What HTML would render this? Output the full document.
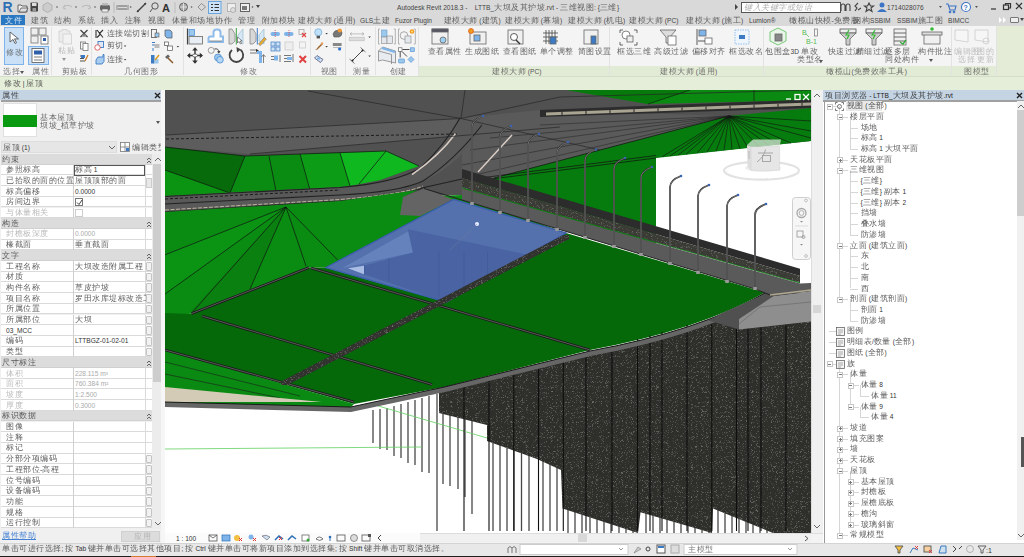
<!DOCTYPE html>
<html><head><meta charset="utf-8"><style>*{box-sizing:border-box;margin:0;padding:0}
html,body{width:1024px;height:557px;overflow:hidden;background:#f0f0f0}
body{position:relative;font-family:"Liberation Sans",sans-serif;font-size:6.6px;line-height:10px;color:#333}
.a{position:absolute;white-space:nowrap}
.c{font-size:8px;line-height:10px;opacity:0.8;letter-spacing:0.5px}
.ic{position:absolute}
</style></head><body>
<div class="a" style="left:0px;top:0px;width:1024px;height:15px;background:#d9d9d9"></div>
<div class="a" style="left:2.5px;top:0px;font:bold 14px/15px 'Liberation Sans',sans-serif;color:#2f6fb5">R</div>
<svg class="ic" style="left:14px;top:0" width="250" height="15" viewBox="14 0 250 15">
<path d="M18,5 h3 l1,1 h5 v6 h-9z" fill="#f0f0f0" stroke="#555" stroke-width="0.9"/><path d="M19,12 l2,-4 h7 l-2,4z" fill="#ddd" stroke="#555" stroke-width="0.8"/>
<rect x="30.5" y="2.5" width="7.5" height="9" rx="0.8" fill="#444"/><rect x="32" y="3" width="4.5" height="3" fill="#ddd"/><rect x="32.5" y="8" width="3.5" height="3" fill="#999"/>
<path d="M43,5 l4.5,-2.5 l4.5,2.5 v5 l-4.5,2.5 l-4.5,-2.5z" fill="#ccc" stroke="#aaa" stroke-width="0.8"/>
<path d="M63,8 q4,-5 9,-1 M63,8 l2,-3 M63,8 l3,1" fill="none" stroke="#bbb" stroke-width="1.1"/>
<path d="M91,8 q-4,-5 -9,-1 M91,8 l-2,-3 M91,8 l-3,1" fill="none" stroke="#bbb" stroke-width="1.1"/>
<rect x="100" y="5" width="10" height="5.5" rx="1.5" fill="#666"/><rect x="102" y="3" width="6" height="2.5" fill="#bbb"/><rect x="102" y="9" width="6" height="3" fill="#eee" stroke="#666" stroke-width="0.6"/>
<path d="M118,6 h9 M118,9 h9" stroke="#666" stroke-width="1.1"/><path d="M117,5 v5 M128,5 v5" stroke="#666" stroke-width="0.7"/>
<path d="M137,12 l9,-9" stroke="#444" stroke-width="1.4"/><circle cx="138" cy="11" r="1" fill="#444"/><circle cx="145" cy="4" r="1" fill="#444"/>
<circle cx="155" cy="6" r="3.2" fill="none" stroke="#555" stroke-width="1"/><path d="M152.5,8.5 l-2.5,3.5" stroke="#555" stroke-width="1"/>
<text x="162" y="12" font-size="11" font-weight="bold" fill="#333" font-family="Liberation Sans">A</text>
<circle cx="183.5" cy="7" r="4" fill="#aaa" stroke="#555" stroke-width="0.8"/><path d="M180,7 h7 M183.5,3 v8" stroke="#eee" stroke-width="0.8"/>
<path d="M198,7 l3.5,-3.5 l4,3.5 l-4,3.5z" fill="none" stroke="#888" stroke-width="0.9"/>
<rect x="208.5" y="1.5" width="12.5" height="12" fill="#cde3f7" stroke="#6aa4dc"/><g stroke="#333" stroke-width="1"><path d="M211,4.5 h2 M214.5,4.5 h4.5 M211,7.5 h2 M214.5,7.5 h4.5 M211,10.5 h2 M214.5,10.5 h4.5"/></g>
<rect x="227.5" y="3.5" width="8" height="8" fill="#eee" stroke="#aaa" stroke-width="0.8"/><circle cx="233" cy="10" r="2.5" fill="#ddd" stroke="#999" stroke-width="0.6"/>
<rect x="240.5" y="3.5" width="9" height="8" fill="#eee" stroke="#555" stroke-width="0.9"/><rect x="242" y="6" width="5" height="4" fill="#777"/>
<g fill="#555"><circle cx="57" cy="7" r="0.8"/><circle cx="76" cy="7" r="0.8"/><circle cx="95" cy="7" r="0.8"/><circle cx="130.7" cy="7" r="0.8"/><circle cx="191.6" cy="7" r="0.8"/><circle cx="252.5" cy="7" r="0.8"/></g>
<path d="M256,5 h4 l-2,3z" fill="#444"/>
<g stroke="#bbb"><line x1="114" y1="2" x2="114" y2="13"/><line x1="175" y1="2" x2="175" y2="13"/></g>
</svg>
<div class="a" style="left:397px;top:3px;color:#444;">Autodesk Revit 2018.3 -&nbsp;&nbsp;&nbsp; LTTB_<span class="c">大坝及其护坡</span>.rvt - <span class="c">三维视图</span>: {<span class="c">三维</span>}</div>
<div class="a" style="left:735px;top:4px;width:0;height:0;border-left:3px solid #444;border-top:3px solid transparent;border-bottom:3px solid transparent"></div>
<div class="a" style="left:741px;top:2px;width:100px;height:11px;background:#fff;border:1px solid #555"></div>
<div class="a" style="left:744px;top:3px;color:#999;font-style:italic"><span class="c">键入关键字或短语</span></div>
<svg class="ic" style="left:838px;top:0" width="186" height="15" viewBox="838 0 186 15">
<g fill="none" stroke="#444" stroke-width="1.1"><path d="M841,11 v-5 q0,-2 2,-2 q2,0 2,2 v5 M846,11 v-5 q0,-2 2,-2 q2,0 2,2 v5"/>
<path d="M855,11 l2,-3 l-2,-2 l3,-3 M858,10 l3,-2"/>
<path d="M869,3 l1.5,3 h3 l-2.5,2 l1,3.5 l-3,-2 l-3,2 l1,-3.5 l-2.5,-2 h3z"/></g>
<circle cx="882" cy="5" r="2.5" fill="#3b74c4"/><path d="M877,12 q5,-6 10,0z" fill="#3b74c4"/>
<path d="M939,6 h3 l-1.5,2z" fill="#555"/>
<g fill="none" stroke="#3b74c4" stroke-width="1.1"><path d="M946,4 h2 l2,6 h5 l1,-4 h-7"/><circle cx="950" cy="12" r="0.8"/><circle cx="954" cy="12" r="0.8"/></g>
<line x1="961" y1="2" x2="961" y2="13" stroke="#ccc"/>
<circle cx="966" cy="7" r="4.5" fill="#fff" stroke="#3b74c4" stroke-width="1.1"/><text x="963.5" y="10" font-size="7" font-weight="bold" fill="#3b74c4" font-family="Liberation Sans">?</text>
<path d="M975,6 h3 l-1.5,2z" fill="#555"/>
<g stroke="#333" stroke-width="1.2" fill="none"><line x1="991" y1="9" x2="996" y2="9"/><rect x="1003.5" y="5" width="5" height="4.5"/><path d="M1005.5,5 v-1.5 h5 v4.5 h-2"/><path d="M1016,3 l6,6 M1022,3 l-6,6"/></g>
</svg>
<div class="a" style="left:887px;top:3px;color:#444;">1714028076</div>
<div class="a" style="left:0px;top:15px;width:1024px;height:10px;background:#d9d9d9"></div>
<div class="a" style="left:1px;top:15px;width:24px;height:10px;background:#2b78c2"></div>
<div class="a" style="left:5px;top:15.5px;color:#fff"><span class="c">文件</span></div>
<div class="a" style="left:31px;top:15.5px;color:#444;"><span class="c">建筑</span></div>
<div class="a" style="left:54px;top:15.5px;color:#444;"><span class="c">结构</span></div>
<div class="a" style="left:78px;top:15.5px;color:#444;"><span class="c">系统</span></div>
<div class="a" style="left:101px;top:15.5px;color:#444;"><span class="c">插入</span></div>
<div class="a" style="left:124.5px;top:15.5px;color:#444;"><span class="c">注释</span></div>
<div class="a" style="left:148px;top:15.5px;color:#444;"><span class="c">视图</span></div>
<div class="a" style="left:171.5px;top:15.5px;color:#444;"><span class="c">体量和场地</span></div>
<div class="a" style="left:215px;top:15.5px;color:#444;"><span class="c">协作</span></div>
<div class="a" style="left:238px;top:15.5px;color:#444;"><span class="c">管理</span></div>
<div class="a" style="left:261.5px;top:15.5px;color:#444;"><span class="c">附加模块</span></div>
<div class="a" style="left:298px;top:15.5px;color:#444;"><span class="c">建模大师</span> (<span class="c">通用</span>)</div>
<div class="a" style="left:360px;top:15.5px;color:#444;">GLS<span class="c">土建</span></div>
<div class="a" style="left:395px;top:15.5px;color:#444;">Fuzor Plugin</div>
<div class="a" style="left:443.5px;top:15.5px;color:#444;"><span class="c">建模大师</span> (<span class="c">建筑</span>)</div>
<div class="a" style="left:505px;top:15.5px;color:#444;"><span class="c">建模大师</span> (<span class="c">幕墙</span>)</div>
<div class="a" style="left:568px;top:15.5px;color:#444;"><span class="c">建模大师</span> (<span class="c">机电</span>)</div>
<div class="a" style="left:629px;top:15.5px;color:#444;"><span class="c">建模大师</span> (PC)</div>
<div class="a" style="left:686px;top:15.5px;color:#444;"><span class="c">建模大师</span> (<span class="c">施工</span>)</div>
<div class="a" style="left:749px;top:15.5px;color:#444;">Lumion®</div>
<div class="a" style="left:789px;top:15.5px;color:#444;"><span class="c">橄榄山快模</span>-<span class="c">免费版</span></div>
<div class="a" style="left:853px;top:15.5px;color:#444;"><span class="c">钢构</span>SSBIM</div>
<div class="a" style="left:897px;top:15.5px;color:#444;">SSBIM<span class="c">施工图</span></div>
<div class="a" style="left:948px;top:15.5px;color:#444;">BIMCC</div>
<svg class="ic" style="left:998px;top:17px" width="10" height="6"><path d="M1,0 L4,3 L1,6z M5,0 L8,3 L5,6z" fill="#fff"/></svg>
<div class="a" style="left:1010px;top:17px;width:9px;height:6px;border:1px solid #777;border-radius:1px;background:#eee"></div>
<div class="a" style="left:1020px;top:18px;width:0;height:0;border-top:3px solid #444;border-left:2px solid transparent;border-right:2px solid transparent"></div>
<div class="a" style="left:0px;top:25px;width:1024px;height:51px;background:#f4f4f4"></div>
<div class="a" style="left:0px;top:25px;width:1024px;height:1px;background:#dadada"></div>
<div class="a" style="left:996px;top:26px;width:28px;height:50px;background:#e4ecd8"></div>
<div class="a" style="left:418px;top:66px;width:578px;height:10px;background:#e2ebd5"></div>
<div class="a" style="left:51px;top:27px;width:1px;height:48px;background:#e2e2e2"></div>
<div class="a" style="left:91px;top:27px;width:1px;height:48px;background:#e2e2e2"></div>
<div class="a" style="left:183px;top:27px;width:1px;height:48px;background:#e2e2e2"></div>
<div class="a" style="left:310px;top:27px;width:1px;height:48px;background:#e2e2e2"></div>
<div class="a" style="left:345px;top:27px;width:1px;height:48px;background:#e2e2e2"></div>
<div class="a" style="left:375px;top:27px;width:1px;height:48px;background:#e2e2e2"></div>
<div class="a" style="left:418px;top:27px;width:1px;height:48px;background:#e2e2e2"></div>
<div class="a" style="left:609px;top:27px;width:1px;height:48px;background:#e2e2e2"></div>
<div class="a" style="left:763px;top:27px;width:1px;height:48px;background:#e2e2e2"></div>
<div class="a" style="left:951px;top:27px;width:1px;height:48px;background:#e2e2e2"></div>
<div class="a" style="left:996px;top:27px;width:1px;height:48px;background:#e2e2e2"></div>
<div class="a" style="left:4px;top:27px;width:20px;height:38px;background:#c9e0f7;border:1px solid #7eb4ea"></div>
<svg class="ic" style="left:9px;top:31px" width="10" height="14"><path d="M1,1 v10 l3,-2.5 l2,4 l1.5,-0.8 l-2,-3.8 h4z" fill="#fff" stroke="#555" stroke-width="0.9"/></svg>
<div class="a" style="left:6px;top:48px;color:#555"><span class="c">修改</span></div>
<div class="a" style="left:3px;top:67px;color:#555"><span class="c">选择</span></div>
<div class="a" style="left:20px;top:71px;width:0;height:0;border-top:3px solid #555;border-left:2.5px solid transparent;border-right:2.5px solid transparent"></div>
<svg class="ic" style="left:29px;top:27px" width="22" height="18"><g stroke="#777" fill="#eee" stroke-width="0.8"><rect x="2" y="1" width="7" height="7"/><rect x="10" y="1" width="7" height="7"/><rect x="2" y="9" width="7" height="7"/></g><rect x="12" y="9" width="7" height="8" fill="#fff" stroke="#666" stroke-width="0.8"/><rect x="14" y="11" width="3" height="3" fill="#2f5fa8"/></svg>
<div class="a" style="left:28px;top:46px;width:21px;height:19px;background:#c9e0f7;border:1px solid #7eb4ea"></div>
<svg class="ic" style="left:31px;top:48px" width="15" height="16"><rect x="1" y="0.5" width="12" height="14" fill="#fff" stroke="#555" stroke-width="0.8"/><rect x="3" y="2.5" width="8" height="4" fill="#2f5fa8"/><path d="M3,9 h8 M3,12 h8" stroke="#555" stroke-width="0.8"/></svg>
<div class="a" style="left:32px;top:67px;color:#555"><span class="c">属性</span></div>
<svg class="ic" style="left:55px;top:27px" width="125" height="40" viewBox="55 27 125 40">
<path d="M59,31 h3 v-1.5 h5 v1.5 h3 v11 h-11z" fill="#ececec" stroke="#cfcfcf" stroke-width="0.8"/><rect x="63" y="34" width="8.5" height="10" fill="#f2f2f2" stroke="#cfcfcf" stroke-width="0.8"/>
<path d="M80.5,30 l7,7 M87.5,30 l-7,7" stroke="#444" stroke-width="1.3"/><ellipse cx="84" cy="35.5" rx="2.5" ry="1.2" fill="#888"/>
<rect x="80.5" y="42" width="5" height="7" fill="#f4f4f4" stroke="#777" stroke-width="0.8"/><rect x="83" y="43.5" width="5" height="7" fill="#fff" stroke="#777" stroke-width="0.8"/>
<path d="M80,56 h5 M80,58.5 h4 M80,61 h5" stroke="#555" stroke-width="1"/><rect x="81" y="55" width="4" height="3" fill="#3c7bc4"/><path d="M85,61 l3,-6" stroke="#c87a20" stroke-width="1.3"/>
</svg>
<div class="a" style="left:58px;top:46px;color:#aaa"><span class="c">粘贴</span></div>
<div class="a" style="left:62px;top:58px;width:0;height:0;border-top:3px solid #999;border-left:2.5px solid transparent;border-right:2.5px solid transparent"></div>
<div class="a" style="left:61.5px;top:67px;color:#555"><span class="c">剪贴板</span></div>
<svg class="ic" style="left:94px;top:27px" width="90" height="40" viewBox="94 27 90 40">
<path d="M96,30 v8 M97,30 l6,7.5 M103,30 l-4,4 M97,37.5 l3,-3" fill="none" stroke="#333" stroke-width="1.1"/>
<rect x="98" y="41.5" width="5.5" height="6" fill="#dfe9f5" stroke="#3c7bc4" stroke-width="0.9"/><circle cx="97.5" cy="47.5" r="2.7" fill="#fff" stroke="#d44" stroke-width="0.8"/>
<path d="M96,60 l2,-3 h5 v-2.5 h1 v7 l-2,2.5 h-6z" fill="#a9cdef" stroke="#3c7bc4" stroke-width="0.9"/>
<g fill="#444"><path d="M143.2,33.6 h2.6 l-1.3,1.6z"/><path d="M123.8,45.5 h2.6 l-1.3,1.6z"/><path d="M123.8,59 h2.6 l-1.3,1.6z"/><path d="M176.6,46 h2.6 l-1.3,1.6z"/></g>
<rect x="151.5" y="29.5" width="5" height="8" fill="#f4f4f4" stroke="#555" stroke-width="0.8"/><rect x="155" y="33" width="4" height="4" fill="#9cc8ec" stroke="#555" stroke-width="0.6"/>
<path d="M165,30 h5 l2,2 v6 h-5 l-2,-2z" fill="#7eb4ea" stroke="#555" stroke-width="0.7"/>
<path d="M152,42.5 h3 M152,45 h3" stroke="#3c7bc4" stroke-width="1"/><rect x="154.5" y="44" width="5" height="4" fill="#bbb"/><path d="M153,48 v3" stroke="#3c7bc4"/>
<rect x="164.5" y="42" width="4" height="3.5" fill="#fff" stroke="#555" stroke-width="0.7"/><rect x="167.5" y="46" width="5" height="4.5" fill="#fff" stroke="#555" stroke-width="0.7"/>
<rect x="151" y="55" width="3.5" height="8.5" fill="#3c7bc4"/><rect x="154.5" y="59" width="4" height="4.5" fill="#9cc8ec"/><path d="M155,60 l4,-5" stroke="#d89a20" stroke-width="1.5"/>
<path d="M165,57 l3,-2.5 l2,2 l-3,2.5z" fill="#666"/><path d="M168,58 l5,5" stroke="#8a5a2a" stroke-width="1.5"/>
</svg>
<div class="a" style="left:106.7px;top:29px;color:#444"><span class="c">连接端切割</span></div>
<div class="a" style="left:106.7px;top:41px;color:#444"><span class="c">剪切</span></div>
<div class="a" style="left:106.7px;top:55px;color:#444"><span class="c">连接</span></div>
<div class="a" style="left:124px;top:67px;color:#555"><span class="c">几何图形</span></div>
<svg class="ic" style="left:185px;top:27px" width="125" height="40" viewBox="185 27 125 40">
<line x1="187.5" y1="28.5" x2="187.5" y2="44.5" stroke="#444" stroke-width="1.2"/>
<rect x="189" y="29.5" width="5.5" height="6" fill="#9cc8ec" stroke="#4a8ad0" stroke-width="0.7"/>
<rect x="189" y="36.5" width="13.5" height="7.5" fill="#e8eef4" stroke="#666" stroke-width="0.8"/>
<path d="M208.5,42 v-3.5 q0,-2 2,-2 h3 v-4 q0,-3 3,-3 h1 q3,0 3,3 v4 h2.5 v5.5z" fill="#fff" stroke="#8fbce8" stroke-width="2"/>
<path d="M209.5,41 h12.5" stroke="#777" stroke-width="0.8"/>
<path d="M229,29 h3 l3,5 v7 l-3,3 h-3z" fill="#d8d8d8" stroke="#888" stroke-width="0.8"/>
<line x1="236.3" y1="28" x2="236.3" y2="44.5" stroke="#3aa040" stroke-width="1"/>
<path d="M238,35 l5,-6 v15 l-5,-3z" fill="#d6e8f5" stroke="#9bc" stroke-width="0.7"/>
<path d="M237.5,37 v6 l1.5,-1.5 l1.5,2.5 l1,-0.5 l-1.3,-2.5 h2z" fill="#fff" stroke="#444" stroke-width="0.6"/>
<path d="M250,29 h3 l3,5 v7 l-3,3 h-3z" fill="#d8d8d8" stroke="#888" stroke-width="0.8"/>
<line x1="257.3" y1="28" x2="257.3" y2="44.5" stroke="#3c7bc4" stroke-width="1"/>
<path d="M259,35 l5,-6 v15 l-5,-3z" fill="#d6e8f5" stroke="#9bc" stroke-width="0.7"/>
<path d="M258.5,44 l6,-6.5 l1.8,1.6 l-6,6.5z" fill="#f0b030" stroke="#555" stroke-width="0.5"/>
<rect x="270.5" y="32" width="9.5" height="4" rx="2" fill="#7eb4ea"/><line x1="275.2" y1="30" x2="275.2" y2="38" stroke="#e04040" stroke-width="0.8" stroke-dasharray="1 1"/>
<g fill="#cfe3f5" stroke="#3c7bc4" stroke-width="0.7"><rect x="271" y="42" width="4" height="4"/><rect x="276" y="42" width="4" height="4"/><rect x="271" y="47" width="4" height="4"/><rect x="276" y="47" width="4" height="4"/></g>
<path d="M271,56.5 h6 M271,59.5 h6 M280,55 v7" stroke="#555" stroke-width="0.8"/><rect x="274" y="55.5" width="4" height="5" fill="#7eb4ea"/>
<rect x="284" y="32" width="9.5" height="4" rx="2" fill="#7eb4ea"/><line x1="289" y1="30" x2="289" y2="38" stroke="#e04040" stroke-width="0.8" stroke-dasharray="1 1"/>
<rect x="285" y="42" width="8" height="8" fill="#eee" stroke="#ccc" stroke-width="0.8"/>
<path d="M284,55.5 h7 M284,58.5 h7 M284,61.5 h7 M293,54 v8" stroke="#555" stroke-width="0.8"/><rect x="287" y="57" width="5" height="3" fill="#7eb4ea"/>
<rect x="299" y="29.5" width="5" height="5" fill="none" stroke="#999" stroke-width="0.7"/><path d="M302,33 l4,4 M306,33 l-4,4" stroke="#e04040" stroke-width="1.1"/>
<rect x="299.5" y="42" width="6" height="6" fill="none" stroke="#ccc" stroke-width="0.8"/>
<path d="M299.5,56 l6.5,6.5 M306,56 l-6.5,6.5" stroke="#e04040" stroke-width="2"/>
<path d="M188,55.5 h14 M195,48.5 v14" stroke="#333" stroke-width="1.4"/>
<path d="M187,55.5 l3.2,-2.8 v5.6z M203,55.5 l-3.2,-2.8 v5.6z M195,47.3 l-2.8,3.2 h5.6z M195,63.7 l-2.8,-3.2 h5.6z" fill="#333"/>
<ellipse cx="195" cy="55.5" rx="2.5" ry="1.5" fill="#fff" stroke="#333" stroke-width="0.6"/>
<circle cx="211.2" cy="50.4" r="3" fill="#f4f4f4" stroke="#888" stroke-width="0.8"/><path d="M214.5,49 q4,-1 4.5,3" fill="none" stroke="#333" stroke-width="0.9"/><path d="M217,51.5 l2,2 l1.5,-2.5z" fill="#333"/>
<circle cx="218" cy="57.5" r="3.5" fill="#9cc8ec" stroke="#4a8ad0" stroke-width="0.8"/><circle cx="220" cy="59.8" r="3.3" fill="#b4d6f2" stroke="#4a8ad0" stroke-width="0.8"/>
<path d="M240.5,49.8 A6.8,6.8 0 1,1 232,50" fill="none" stroke="#444" stroke-width="1.8"/><path d="M236.5,47 l4.5,2.5 l-4,3z" fill="#444"/>
<path d="M250,50 h7 M250,53 h7" stroke="#777" stroke-width="1.2"/><path d="M256,49 l3,1.5 l-3,1.5z" fill="#333"/>
<path d="M257,52.5 h3.5 v10.5" fill="none" stroke="#7eb4ea" stroke-width="3"/><path d="M263.5,55 v8 M261.5,57 l2,-2.5 l2,2.5" fill="none" stroke="#666" stroke-width="0.8"/>
</svg>
<svg class="ic" style="left:310px;top:25px" width="110" height="43" viewBox="310 25 110 43">
<circle cx="318.3" cy="32.3" r="3.6" fill="#bfe0fa" stroke="#7aaed8" stroke-width="0.8"/><rect x="316.6" y="35.8" width="3.4" height="2.6" fill="#555"/>
<path d="M325.3,33 h2.6 l-1.3,1.6z M325.3,46 h2.6 l-1.3,1.6z M368.3,36.5 h2.6 l-1.3,1.6z M368.3,55.5 h2.6 l-1.3,1.6z" fill="#444"/>
<path d="M333,34 q1,-4 6,-4 q3,0 3,3 q0,3 -3,4 h-5z" fill="#777" stroke="#555" stroke-width="0.6"/><circle cx="339.8" cy="30.5" r="2.1" fill="#f39a30"/>
<path d="M315,50 q2,-1 3,-3 l4,-4 l1,1 l-4,4 q-1,2 -4,2z" fill="#a0602a"/><circle cx="322" cy="43.5" r="1.2" fill="#e0a060"/>
<rect x="332.8" y="43" width="8.8" height="3" fill="#888"/><path d="M333,47.5 h8.5" stroke="#aaa" stroke-width="0.8"/><circle cx="339.6" cy="49" r="1.6" fill="#2a6fd0"/>
<path d="M314.5,58 l2.5,-2.5 l6,4 l-2.5,3z" fill="#cfe0f0" stroke="#557" stroke-width="0.8"/><rect x="317" y="57.5" width="3" height="2" fill="#7eb4ea"/>
<path d="M350,33.9 h14 M350,33.9 l2,-1.5 M350,33.9 l2,1.5 M364,33.9 l-2,-1.5 M364,33.9 l-2,1.5" stroke="#aaa" stroke-width="0.7" fill="none"/>
<rect x="349.2" y="37.2" width="15" height="3.6" fill="#ddd" stroke="#bbb" stroke-width="0.6"/>
<path d="M352,61 l11,-11" stroke="#333" stroke-width="0.9"/><path d="M349.5,59 l5,4.5 M360.5,47.5 l5,4.5" stroke="#444" stroke-width="0.7"/><circle cx="352.5" cy="60.5" r="1" fill="#222"/><circle cx="362.5" cy="50.5" r="1" fill="#222"/>
<path d="M380,29 h-1.5 v15 h1.5 M393.8,29 h1.5 v15 h-1.5" fill="none" stroke="#aaa" stroke-width="0.9"/>
<rect x="381.5" y="30" width="5.5" height="7" fill="#9cc8ec" stroke="#6a9cc8" stroke-width="0.6"/><rect x="381.5" y="37" width="5.5" height="6.5" fill="#e4e8ec" stroke="#888" stroke-width="0.6"/><rect x="387" y="36" width="5.5" height="7.5" fill="#e4e8ec" stroke="#888" stroke-width="0.6"/>
<path d="M400,29 h-1.5 v15 h1.5 M413.8,29 h1.5 v15 h-1.5" fill="none" stroke="#aaa" stroke-width="0.9"/>
<circle cx="404" cy="35.5" r="3.8" fill="#f4f4f4" stroke="#888" stroke-width="0.7"/><rect x="405" y="36" width="6" height="7" fill="#e4e8ec" stroke="#888" stroke-width="0.6"/><circle cx="412" cy="31.5" r="2.3" fill="#f39a20"/><circle cx="412" cy="31.5" r="1" fill="#ffe070"/>
<path d="M378.5,51 l4,-4 l13,4 v12 l-13,-3 l-4,1z" fill="#e8ecf0" stroke="#777" stroke-width="0.7"/><path d="M382.5,47 l13,4 l-1,2 l-13,-4z" fill="#7eb4ea"/><path d="M378.5,51 l13,3.5 v9.5" fill="none" stroke="#777" stroke-width="0.7"/>
<rect x="398.5" y="47.8" width="3.5" height="3.5" fill="#fff" stroke="#555" stroke-width="0.6"/><rect x="410.5" y="47.8" width="3.8" height="3.8" fill="#9cc8ec" stroke="#4a8ad0" stroke-width="0.6"/>
<path d="M402.5,49.5 h7 M400.2,51.5 v6 M402,51.5 l5,5" stroke="#222" stroke-width="0.8"/>
<rect x="398.5" y="59" width="6" height="4" rx="1" fill="#9cc8ec" stroke="#4a8ad0" stroke-width="0.6"/><path d="M411,56.5 l3,3 l-3,3 l-3,-3z" fill="#9cc8ec" stroke="#4a8ad0" stroke-width="0.6"/>
</svg>
<div class="a" style="left:240px;top:67px;color:#555"><span class="c">修改</span></div>
<div class="a" style="left:320.5px;top:67px;color:#555"><span class="c">视图</span></div>
<div class="a" style="left:353px;top:67px;color:#555"><span class="c">测量</span></div>
<div class="a" style="left:389.5px;top:67px;color:#555"><span class="c">创建</span></div>
<div class="a" style="left:427.5px;top:47px;color:#444"><span class="c">查看属性</span></div>
<div class="a" style="left:465px;top:47px;color:#444"><span class="c">生成图纸</span></div>
<div class="a" style="left:502.5px;top:47px;color:#444"><span class="c">查看图纸</span></div>
<div class="a" style="left:539.5px;top:47px;color:#444"><span class="c">单个调整</span></div>
<div class="a" style="left:577.5px;top:47px;color:#444"><span class="c">简图设置</span></div>
<div class="a" style="left:617px;top:47px;color:#444"><span class="c">框选三维</span></div>
<div class="a" style="left:654px;top:47px;color:#444"><span class="c">高级过滤</span></div>
<div class="a" style="left:691.5px;top:47px;color:#444"><span class="c">偏移对齐</span></div>
<div class="a" style="left:729px;top:47px;color:#444"><span class="c">框选改名</span></div>
<div class="a" style="left:765px;top:47px;color:#444"><span class="c">包围盒</span>3D</div>
<div class="a" style="left:827.5px;top:47px;color:#444"><span class="c">快速过滤</span></div>
<div class="a" style="left:855.5px;top:47px;color:#444"><span class="c">精细过滤</span></div>
<div class="a" style="left:918px;top:47px;color:#444"><span class="c">构件批注</span></div>
<div class="a" style="left:801px;top:46.5px;color:#444"><span class="c">单改</span></div>
<div class="a" style="left:797px;top:55px;color:#444"><span class="c">类型名</span></div>
<div class="a" style="left:819px;top:60px;width:0;height:0;border-top:3px solid #555;border-left:2.5px solid transparent;border-right:2.5px solid transparent"></div>
<div class="a" style="left:885px;top:46.5px;color:#444"><span class="c">逐多层</span></div>
<div class="a" style="left:885px;top:55px;color:#444"><span class="c">同处构件</span></div>
<div class="a" style="left:929px;top:59px;width:0;height:0;border-top:3px solid #555;border-left:2.5px solid transparent;border-right:2.5px solid transparent"></div>
<div class="a" style="left:954px;top:46.5px;color:#b0b0b0"><span class="c">编辑图</span></div>
<div class="a" style="left:958px;top:55px;color:#b0b0b0"><span class="c">选择</span></div>
<div class="a" style="left:977px;top:46.5px;color:#b0b0b0"><span class="c">图的</span></div>
<div class="a" style="left:977px;top:55px;color:#b0b0b0"><span class="c">更新</span></div>
<div class="a" style="left:492px;top:67px;color:#555"><span class="c">建模大师</span> (PC)</div>
<div class="a" style="left:660px;top:67px;color:#555"><span class="c">建模大师</span> (<span class="c">通用</span>)</div>
<div class="a" style="left:826px;top:67px;color:#555"><span class="c">橄榄山</span>(<span class="c">免费效率工具</span>)</div>
<div class="a" style="left:964px;top:67px;color:#555"><span class="c">图模型</span></div>
<svg class="ic" style="left:418px;top:26px" width="578" height="40" viewBox="418 26 578 40">
<g stroke="#666" stroke-width="0.8" fill="#f0f0f0">
<rect x="432" y="29" width="16" height="15"/><rect x="432" y="29" width="16" height="3" fill="#556"/><circle cx="443" cy="40" r="3" fill="#9ccff0"/>
<rect x="470" y="32" width="16" height="12"/><circle cx="471" cy="31" r="2.5" fill="#f39a20" stroke="#e06010"/><rect x="474" y="35" width="6" height="6" fill="#7eb4ea"/>
<rect x="508" y="30" width="15" height="14"/><circle cx="514" cy="37" r="3.5" fill="#fff" stroke="#333"/><path d="M516,40 l4,4" stroke="#333" stroke-width="1.5"/>
<path d="M546,30 v14 M549,30 v14 M552,30 v14 M555,30 v14 M543,33 h15 M543,37 h15 M543,41 h15" stroke="#444"/><rect x="550" y="37" width="6" height="7" fill="#3c7bc4"/>
<rect x="584" y="30" width="14" height="14"/><rect x="591" y="36" width="5" height="8" fill="#3c7bc4"/>
<circle cx="626" cy="35" r="4" fill="#fff"/><rect x="627" y="36" width="6" height="6" fill="#eee"/><path d="M620,30 h3 M620,30 v3 M637,30 h-3 M637,30 v3 M620,45 h3 M620,45 v-3 M637,45 h-3 M637,45 v-3" stroke="#444"/>
<path d="M660,30 h16 l-6,7 v6 h-4 v-6z" fill="#ddd"/><rect x="668" y="36" width="8" height="9" fill="#fff"/>
<path d="M697,29 v16" stroke="#333"/><rect x="699" y="30" width="7" height="6" fill="#7eb4ea"/><rect x="705" y="38" width="7" height="6" fill="#fff"/><path d="M698,41 h7" stroke="#333"/>
<rect x="735" y="30" width="14" height="14" fill="#eef5fc" stroke="#7eb4ea" stroke-dasharray="1.5 1"/><rect x="739" y="35" width="6" height="4" fill="#3c7bc4" stroke="none"/>
<path d="M778,28 l8,4 v9 l-8,4 l-8,-4 v-9z" fill="#e8f5e8" stroke="#5bbb5b"/><rect x="775" y="34" width="7" height="7" fill="#888"/>
<rect x="840" y="29" width="16" height="4" fill="#eee" stroke="#555"/><path d="M840,33 l6,6 v6 h4 v-6 l6,-6z" fill="#ccc"/><path d="M849,30 l-3,5 h3 l-2,4" stroke="#33bb33" fill="none" stroke-width="1.2"/>
<rect x="866" y="29" width="16" height="4" fill="#eee" stroke="#555"/><path d="M866,33 l6,6 v6 h4 v-6 l6,-6z" fill="#ccc"/><path d="M875,30 l-3,5 h3 l-2,4" stroke="#33bb33" fill="none" stroke-width="1.2"/>
<rect x="894" y="29" width="12" height="16"/><path d="M894,33 h12 M894,37 h12 M894,41 h12" stroke="#444"/><path d="M900,42 l3,2 l3,-4" stroke="#3a3" fill="none" stroke-width="1.3"/>
<rect x="924" y="34" width="16" height="10"/><rect x="922" y="32" width="20" height="3" fill="#ddd"/><circle cx="932" cy="29" r="1.8" fill="#3b3" stroke="none"/>
<g stroke="#ccc"><path d="M955,30 h13 v12 l-13,-2z" fill="#f6f6f6"/><path d="M975,30 h13 v12 l-13,-2z" fill="#f6f6f6"/><circle cx="986" cy="41" r="3" fill="none"/></g>
</g>
<g fill="#55bb55" font-family="Liberation Sans" font-size="7"><text x="802" y="35">B</text><text x="806" y="44">B-1</text></g><path d="M806,34 l3,3" stroke="#55bb55" stroke-width="0.7"/><rect x="814.5" y="29" width="3" height="7" fill="none" stroke="#777" stroke-width="0.7"/>
</svg>
<div class="a" style="left:0px;top:76px;width:1024px;height:14px;background:#e5eed9"></div>
<div class="a" style="left:0px;top:76px;width:1024px;height:1px;background:#d4ddc8"></div>
<div class="a" style="left:4px;top:79px;color:#333"><span class="c">修改</span> | <span class="c">屋顶</span></div>
<div class="a" style="left:0px;top:90px;width:163px;height:453px;background:#f0f0f0"></div>
<div class="a" style="left:0px;top:90px;width:163px;height:10px;background:#c5d4e3"></div>
<div class="a" style="left:2px;top:90.5px;color:#222"><span class="c">属性</span></div>
<svg class="ic" style="left:154px;top:92px" width="7" height="7"><path d="M1,1 L6,6 M6,1 L1,6" stroke="#222" stroke-width="1.4"/></svg>
<div class="a" style="left:1px;top:100px;width:162px;height:1.5px;background:#a0a0a0"></div>
<div class="a" style="left:3px;top:103px;width:34px;height:34px;background:#fff;border:1px solid #e0e0e0"></div>
<div class="a" style="left:3px;top:114.5px;width:34px;height:12px;background:#0a9a12"></div>
<div class="a" style="left:40px;top:112.5px;color:#444"><span class="c">基本屋顶</span></div>
<div class="a" style="left:40px;top:120.5px;color:#444"><span class="c">坝坡</span>_<span class="c">植草护坡</span></div>
<div class="a" style="left:156px;top:121px;width:0;height:0;border-top:3px solid #555;border-left:2.5px solid transparent;border-right:2.5px solid transparent"></div>
<div class="a" style="left:1px;top:141px;width:116px;height:12px;background:#e6e6e6;border:1px solid #ddd"></div>
<div class="a" style="left:3px;top:143px;color:#333"><span class="c">屋顶</span> (1)</div>
<svg class="ic" style="left:108px;top:145px" width="8" height="5"><path d="M1,1 L4,4 L7,1" fill="none" stroke="#666" stroke-width="1"/></svg>
<svg class="ic" style="left:120px;top:142px" width="11" height="10"><rect x="0.5" y="0.5" width="9" height="9" fill="#fff" stroke="#777" stroke-width="0.8"/><path d="M5,0.5 v9 M0.5,5 h9" stroke="#777" stroke-width="0.8"/><rect x="6" y="6" width="3" height="3" fill="#3c7bc4"/></svg>
<div class="a" style="left:132px;top:143px;color:#333"><span class="c">编辑类型</span></div>
<div class="a" style="left:1px;top:154.0px;width:151px;height:10.7px;background:#dcdcdc;border-bottom:1px solid #d0d0d0"></div>
<div class="a" style="left:2px;top:154.5px;color:#333"><span class="c">约束</span></div>
<svg class="ic" style="left:146px;top:155.5px" width="6" height="8"><path d="M1,4 L3,2 L5,4 M1,7 L3,5 L5,7" fill="none" stroke="#555" stroke-width="0.9"/></svg>
<div class="a" style="left:1px;top:164.7px;width:151px;height:10.7px;background:#fff;border-bottom:1px solid #dadada"></div>
<div class="a" style="left:73px;top:164.7px;width:1px;height:10.7px;background:#cfcfcf"></div>
<div class="a" style="left:145px;top:164.7px;width:1px;height:10.7px;background:#dadada"></div>
<div class="a" style="left:6px;top:165.2px;color:#333"><span class="c">参照标高</span></div>
<div class="a" style="left:75px;top:165.2px;color:#333"><span class="c">标高</span> 1</div>
<div class="a" style="left:1px;top:175.4px;width:151px;height:10.7px;background:#fff;border-bottom:1px solid #dadada"></div>
<div class="a" style="left:73px;top:175.4px;width:1px;height:10.7px;background:#cfcfcf"></div>
<div class="a" style="left:145px;top:175.4px;width:1px;height:10.7px;background:#dadada"></div>
<div class="a" style="left:6px;top:175.9px;color:#333"><span class="c">已拾取的面的位置</span></div>
<div class="a" style="left:75px;top:175.9px;color:#333"><span class="c">屋顶顶部的面</span></div>
<div class="a" style="left:1px;top:186.1px;width:151px;height:10.7px;background:#fff;border-bottom:1px solid #dadada"></div>
<div class="a" style="left:73px;top:186.1px;width:1px;height:10.7px;background:#cfcfcf"></div>
<div class="a" style="left:145px;top:186.1px;width:1px;height:10.7px;background:#dadada"></div>
<div class="a" style="left:6px;top:186.6px;color:#333"><span class="c">标高偏移</span></div>
<div class="a" style="left:75px;top:186.6px;color:#333">0.0000</div>
<div class="a" style="left:1px;top:196.8px;width:151px;height:10.7px;background:#fff;border-bottom:1px solid #dadada"></div>
<div class="a" style="left:73px;top:196.8px;width:1px;height:10.7px;background:#cfcfcf"></div>
<div class="a" style="left:145px;top:196.8px;width:1px;height:10.7px;background:#dadada"></div>
<div class="a" style="left:6px;top:197.3px;color:#333"><span class="c">房间边界</span></div>
<div class="a" style="left:75px;top:197.3px;color:#333"></div>
<div class="a" style="left:75px;top:198.3px;width:8px;height:8px;background:#fff;border:1px solid #777"></div>
<svg class="ic" style="left:76px;top:199.3px" width="7" height="7"><path d="M1,3.5 L3,5.5 L6,1" fill="none" stroke="#444" stroke-width="1"/></svg>
<div class="a" style="left:1px;top:207.5px;width:151px;height:10.7px;background:#fff;border-bottom:1px solid #dadada"></div>
<div class="a" style="left:73px;top:207.5px;width:1px;height:10.7px;background:#cfcfcf"></div>
<div class="a" style="left:145px;top:207.5px;width:1px;height:10.7px;background:#dadada"></div>
<div class="a" style="left:6px;top:208.0px;color:#aaa"><span class="c">与体量相关</span></div>
<div class="a" style="left:75px;top:208.0px;color:#aaa"></div>
<div class="a" style="left:75px;top:209.0px;width:8px;height:8px;background:#fff;border:1px solid #ccc"></div>
<div class="a" style="left:1px;top:218.2px;width:151px;height:10.7px;background:#dcdcdc;border-bottom:1px solid #d0d0d0"></div>
<div class="a" style="left:2px;top:218.7px;color:#333"><span class="c">构造</span></div>
<svg class="ic" style="left:146px;top:219.7px" width="6" height="8"><path d="M1,4 L3,2 L5,4 M1,7 L3,5 L5,7" fill="none" stroke="#555" stroke-width="0.9"/></svg>
<div class="a" style="left:1px;top:228.9px;width:151px;height:10.7px;background:#fff;border-bottom:1px solid #dadada"></div>
<div class="a" style="left:73px;top:228.9px;width:1px;height:10.7px;background:#cfcfcf"></div>
<div class="a" style="left:145px;top:228.9px;width:1px;height:10.7px;background:#dadada"></div>
<div class="a" style="left:6px;top:229.4px;color:#aaa"><span class="c">封檐板深度</span></div>
<div class="a" style="left:75px;top:229.4px;color:#aaa">0.0000</div>
<div class="a" style="left:1px;top:239.6px;width:151px;height:10.7px;background:#fff;border-bottom:1px solid #dadada"></div>
<div class="a" style="left:73px;top:239.6px;width:1px;height:10.7px;background:#cfcfcf"></div>
<div class="a" style="left:145px;top:239.6px;width:1px;height:10.7px;background:#dadada"></div>
<div class="a" style="left:6px;top:240.1px;color:#333"><span class="c">椽截面</span></div>
<div class="a" style="left:75px;top:240.1px;color:#333"><span class="c">垂直截面</span></div>
<div class="a" style="left:1px;top:250.3px;width:151px;height:10.7px;background:#dcdcdc;border-bottom:1px solid #d0d0d0"></div>
<div class="a" style="left:2px;top:250.8px;color:#333"><span class="c">文字</span></div>
<svg class="ic" style="left:146px;top:251.8px" width="6" height="8"><path d="M1,4 L3,2 L5,4 M1,7 L3,5 L5,7" fill="none" stroke="#555" stroke-width="0.9"/></svg>
<div class="a" style="left:1px;top:261.0px;width:151px;height:10.7px;background:#fff;border-bottom:1px solid #dadada"></div>
<div class="a" style="left:73px;top:261.0px;width:1px;height:10.7px;background:#cfcfcf"></div>
<div class="a" style="left:145px;top:261.0px;width:1px;height:10.7px;background:#dadada"></div>
<div class="a" style="left:6px;top:261.5px;color:#333"><span class="c">工程名称</span></div>
<div class="a" style="left:75px;top:261.5px;color:#333"><span class="c">大坝改造附属工程</span></div>
<div class="a" style="left:145.5px;top:262.0px;width:6.5px;height:8.7px;background:#f2f2f2;border:1px solid #c4c4c4;border-radius:1px"></div>
<div class="a" style="left:1px;top:271.7px;width:151px;height:10.7px;background:#fff;border-bottom:1px solid #dadada"></div>
<div class="a" style="left:73px;top:271.7px;width:1px;height:10.7px;background:#cfcfcf"></div>
<div class="a" style="left:145px;top:271.7px;width:1px;height:10.7px;background:#dadada"></div>
<div class="a" style="left:6px;top:272.2px;color:#333"><span class="c">材质</span></div>
<div class="a" style="left:75px;top:272.2px;color:#333"></div>
<div class="a" style="left:145.5px;top:272.7px;width:6.5px;height:8.7px;background:#f2f2f2;border:1px solid #c4c4c4;border-radius:1px"></div>
<div class="a" style="left:1px;top:282.4px;width:151px;height:10.7px;background:#fff;border-bottom:1px solid #dadada"></div>
<div class="a" style="left:73px;top:282.4px;width:1px;height:10.7px;background:#cfcfcf"></div>
<div class="a" style="left:145px;top:282.4px;width:1px;height:10.7px;background:#dadada"></div>
<div class="a" style="left:6px;top:282.9px;color:#333"><span class="c">构件名称</span></div>
<div class="a" style="left:75px;top:282.9px;color:#333"><span class="c">草皮护坡</span></div>
<div class="a" style="left:145.5px;top:283.4px;width:6.5px;height:8.7px;background:#f2f2f2;border:1px solid #c4c4c4;border-radius:1px"></div>
<div class="a" style="left:1px;top:293.1px;width:151px;height:10.7px;background:#fff;border-bottom:1px solid #dadada"></div>
<div class="a" style="left:73px;top:293.1px;width:1px;height:10.7px;background:#cfcfcf"></div>
<div class="a" style="left:145px;top:293.1px;width:1px;height:10.7px;background:#dadada"></div>
<div class="a" style="left:6px;top:293.6px;color:#333"><span class="c">项目名称</span></div>
<div class="a" style="left:75px;top:293.6px;color:#333"><span class="c">罗田水库堤标改造工程</span>...</div>
<div class="a" style="left:145.5px;top:294.1px;width:6.5px;height:8.7px;background:#f2f2f2;border:1px solid #c4c4c4;border-radius:1px"></div>
<div class="a" style="left:1px;top:303.8px;width:151px;height:10.7px;background:#fff;border-bottom:1px solid #dadada"></div>
<div class="a" style="left:73px;top:303.8px;width:1px;height:10.7px;background:#cfcfcf"></div>
<div class="a" style="left:145px;top:303.8px;width:1px;height:10.7px;background:#dadada"></div>
<div class="a" style="left:6px;top:304.3px;color:#333"><span class="c">所属位置</span></div>
<div class="a" style="left:75px;top:304.3px;color:#333"></div>
<div class="a" style="left:145.5px;top:304.8px;width:6.5px;height:8.7px;background:#f2f2f2;border:1px solid #c4c4c4;border-radius:1px"></div>
<div class="a" style="left:1px;top:314.5px;width:151px;height:10.7px;background:#fff;border-bottom:1px solid #dadada"></div>
<div class="a" style="left:73px;top:314.5px;width:1px;height:10.7px;background:#cfcfcf"></div>
<div class="a" style="left:145px;top:314.5px;width:1px;height:10.7px;background:#dadada"></div>
<div class="a" style="left:6px;top:315.0px;color:#333"><span class="c">所属部位</span></div>
<div class="a" style="left:75px;top:315.0px;color:#333"><span class="c">大坝</span></div>
<div class="a" style="left:145.5px;top:315.5px;width:6.5px;height:8.7px;background:#f2f2f2;border:1px solid #c4c4c4;border-radius:1px"></div>
<div class="a" style="left:1px;top:325.2px;width:151px;height:10.7px;background:#fff;border-bottom:1px solid #dadada"></div>
<div class="a" style="left:73px;top:325.2px;width:1px;height:10.7px;background:#cfcfcf"></div>
<div class="a" style="left:145px;top:325.2px;width:1px;height:10.7px;background:#dadada"></div>
<div class="a" style="left:6px;top:325.7px;color:#333">03_MCC</div>
<div class="a" style="left:75px;top:325.7px;color:#333"></div>
<div class="a" style="left:145.5px;top:326.2px;width:6.5px;height:8.7px;background:#f2f2f2;border:1px solid #c4c4c4;border-radius:1px"></div>
<div class="a" style="left:1px;top:335.9px;width:151px;height:10.7px;background:#fff;border-bottom:1px solid #dadada"></div>
<div class="a" style="left:73px;top:335.9px;width:1px;height:10.7px;background:#cfcfcf"></div>
<div class="a" style="left:145px;top:335.9px;width:1px;height:10.7px;background:#dadada"></div>
<div class="a" style="left:6px;top:336.4px;color:#333"><span class="c">编码</span></div>
<div class="a" style="left:75px;top:336.4px;color:#333">LTTBGZ-01-02-01</div>
<div class="a" style="left:145.5px;top:336.9px;width:6.5px;height:8.7px;background:#f2f2f2;border:1px solid #c4c4c4;border-radius:1px"></div>
<div class="a" style="left:1px;top:346.6px;width:151px;height:10.7px;background:#fff;border-bottom:1px solid #dadada"></div>
<div class="a" style="left:73px;top:346.6px;width:1px;height:10.7px;background:#cfcfcf"></div>
<div class="a" style="left:145px;top:346.6px;width:1px;height:10.7px;background:#dadada"></div>
<div class="a" style="left:6px;top:347.1px;color:#333"><span class="c">类型</span></div>
<div class="a" style="left:75px;top:347.1px;color:#333"></div>
<div class="a" style="left:145.5px;top:347.6px;width:6.5px;height:8.7px;background:#f2f2f2;border:1px solid #c4c4c4;border-radius:1px"></div>
<div class="a" style="left:1px;top:357.3px;width:151px;height:10.7px;background:#dcdcdc;border-bottom:1px solid #d0d0d0"></div>
<div class="a" style="left:2px;top:357.8px;color:#333"><span class="c">尺寸标注</span></div>
<svg class="ic" style="left:146px;top:358.8px" width="6" height="8"><path d="M1,4 L3,2 L5,4 M1,7 L3,5 L5,7" fill="none" stroke="#555" stroke-width="0.9"/></svg>
<div class="a" style="left:1px;top:368.0px;width:151px;height:10.7px;background:#fff;border-bottom:1px solid #dadada"></div>
<div class="a" style="left:73px;top:368.0px;width:1px;height:10.7px;background:#cfcfcf"></div>
<div class="a" style="left:145px;top:368.0px;width:1px;height:10.7px;background:#dadada"></div>
<div class="a" style="left:6px;top:368.5px;color:#aaa"><span class="c">体积</span></div>
<div class="a" style="left:75px;top:368.5px;color:#aaa">228.115 m³</div>
<div class="a" style="left:1px;top:378.7px;width:151px;height:10.7px;background:#fff;border-bottom:1px solid #dadada"></div>
<div class="a" style="left:73px;top:378.7px;width:1px;height:10.7px;background:#cfcfcf"></div>
<div class="a" style="left:145px;top:378.7px;width:1px;height:10.7px;background:#dadada"></div>
<div class="a" style="left:6px;top:379.2px;color:#aaa"><span class="c">面积</span></div>
<div class="a" style="left:75px;top:379.2px;color:#aaa">760.384 m²</div>
<div class="a" style="left:1px;top:389.4px;width:151px;height:10.7px;background:#fff;border-bottom:1px solid #dadada"></div>
<div class="a" style="left:73px;top:389.4px;width:1px;height:10.7px;background:#cfcfcf"></div>
<div class="a" style="left:145px;top:389.4px;width:1px;height:10.7px;background:#dadada"></div>
<div class="a" style="left:6px;top:389.9px;color:#aaa"><span class="c">坡度</span></div>
<div class="a" style="left:75px;top:389.9px;color:#aaa">1:2.500</div>
<div class="a" style="left:1px;top:400.1px;width:151px;height:10.7px;background:#fff;border-bottom:1px solid #dadada"></div>
<div class="a" style="left:73px;top:400.1px;width:1px;height:10.7px;background:#cfcfcf"></div>
<div class="a" style="left:145px;top:400.1px;width:1px;height:10.7px;background:#dadada"></div>
<div class="a" style="left:6px;top:400.6px;color:#aaa"><span class="c">厚度</span></div>
<div class="a" style="left:75px;top:400.6px;color:#aaa">0.3000</div>
<div class="a" style="left:1px;top:410.8px;width:151px;height:10.7px;background:#dcdcdc;border-bottom:1px solid #d0d0d0"></div>
<div class="a" style="left:2px;top:411.3px;color:#333"><span class="c">标识数据</span></div>
<svg class="ic" style="left:146px;top:412.3px" width="6" height="8"><path d="M1,4 L3,2 L5,4 M1,7 L3,5 L5,7" fill="none" stroke="#555" stroke-width="0.9"/></svg>
<div class="a" style="left:1px;top:421.5px;width:151px;height:10.7px;background:#fff;border-bottom:1px solid #dadada"></div>
<div class="a" style="left:73px;top:421.5px;width:1px;height:10.7px;background:#cfcfcf"></div>
<div class="a" style="left:145px;top:421.5px;width:1px;height:10.7px;background:#dadada"></div>
<div class="a" style="left:6px;top:422.0px;color:#333"><span class="c">图像</span></div>
<div class="a" style="left:75px;top:422.0px;color:#333"></div>
<div class="a" style="left:1px;top:432.2px;width:151px;height:10.7px;background:#fff;border-bottom:1px solid #dadada"></div>
<div class="a" style="left:73px;top:432.2px;width:1px;height:10.7px;background:#cfcfcf"></div>
<div class="a" style="left:145px;top:432.2px;width:1px;height:10.7px;background:#dadada"></div>
<div class="a" style="left:6px;top:432.7px;color:#333"><span class="c">注释</span></div>
<div class="a" style="left:75px;top:432.7px;color:#333"></div>
<div class="a" style="left:1px;top:442.9px;width:151px;height:10.7px;background:#fff;border-bottom:1px solid #dadada"></div>
<div class="a" style="left:73px;top:442.9px;width:1px;height:10.7px;background:#cfcfcf"></div>
<div class="a" style="left:145px;top:442.9px;width:1px;height:10.7px;background:#dadada"></div>
<div class="a" style="left:6px;top:443.4px;color:#333"><span class="c">标记</span></div>
<div class="a" style="left:75px;top:443.4px;color:#333"></div>
<div class="a" style="left:1px;top:453.6px;width:151px;height:10.7px;background:#fff;border-bottom:1px solid #dadada"></div>
<div class="a" style="left:73px;top:453.6px;width:1px;height:10.7px;background:#cfcfcf"></div>
<div class="a" style="left:145px;top:453.6px;width:1px;height:10.7px;background:#dadada"></div>
<div class="a" style="left:6px;top:454.1px;color:#333"><span class="c">分部分项编码</span></div>
<div class="a" style="left:75px;top:454.1px;color:#333"></div>
<div class="a" style="left:145.5px;top:454.6px;width:6.5px;height:8.7px;background:#f2f2f2;border:1px solid #c4c4c4;border-radius:1px"></div>
<div class="a" style="left:1px;top:464.3px;width:151px;height:10.7px;background:#fff;border-bottom:1px solid #dadada"></div>
<div class="a" style="left:73px;top:464.3px;width:1px;height:10.7px;background:#cfcfcf"></div>
<div class="a" style="left:145px;top:464.3px;width:1px;height:10.7px;background:#dadada"></div>
<div class="a" style="left:6px;top:464.8px;color:#333"><span class="c">工程部位</span>-<span class="c">高程</span></div>
<div class="a" style="left:75px;top:464.8px;color:#333"></div>
<div class="a" style="left:145.5px;top:465.3px;width:6.5px;height:8.7px;background:#f2f2f2;border:1px solid #c4c4c4;border-radius:1px"></div>
<div class="a" style="left:1px;top:475.0px;width:151px;height:10.7px;background:#fff;border-bottom:1px solid #dadada"></div>
<div class="a" style="left:73px;top:475.0px;width:1px;height:10.7px;background:#cfcfcf"></div>
<div class="a" style="left:145px;top:475.0px;width:1px;height:10.7px;background:#dadada"></div>
<div class="a" style="left:6px;top:475.5px;color:#333"><span class="c">位号编码</span></div>
<div class="a" style="left:75px;top:475.5px;color:#333"></div>
<div class="a" style="left:145.5px;top:476.0px;width:6.5px;height:8.7px;background:#f2f2f2;border:1px solid #c4c4c4;border-radius:1px"></div>
<div class="a" style="left:1px;top:485.7px;width:151px;height:10.7px;background:#fff;border-bottom:1px solid #dadada"></div>
<div class="a" style="left:73px;top:485.7px;width:1px;height:10.7px;background:#cfcfcf"></div>
<div class="a" style="left:145px;top:485.7px;width:1px;height:10.7px;background:#dadada"></div>
<div class="a" style="left:6px;top:486.2px;color:#333"><span class="c">设备编码</span></div>
<div class="a" style="left:75px;top:486.2px;color:#333"></div>
<div class="a" style="left:145.5px;top:486.7px;width:6.5px;height:8.7px;background:#f2f2f2;border:1px solid #c4c4c4;border-radius:1px"></div>
<div class="a" style="left:1px;top:496.4px;width:151px;height:10.7px;background:#fff;border-bottom:1px solid #dadada"></div>
<div class="a" style="left:73px;top:496.4px;width:1px;height:10.7px;background:#cfcfcf"></div>
<div class="a" style="left:145px;top:496.4px;width:1px;height:10.7px;background:#dadada"></div>
<div class="a" style="left:6px;top:496.9px;color:#333"><span class="c">功能</span></div>
<div class="a" style="left:75px;top:496.9px;color:#333"></div>
<div class="a" style="left:145.5px;top:497.4px;width:6.5px;height:8.7px;background:#f2f2f2;border:1px solid #c4c4c4;border-radius:1px"></div>
<div class="a" style="left:1px;top:507.1px;width:151px;height:10.7px;background:#fff;border-bottom:1px solid #dadada"></div>
<div class="a" style="left:73px;top:507.1px;width:1px;height:10.7px;background:#cfcfcf"></div>
<div class="a" style="left:145px;top:507.1px;width:1px;height:10.7px;background:#dadada"></div>
<div class="a" style="left:6px;top:507.6px;color:#333"><span class="c">规格</span></div>
<div class="a" style="left:75px;top:507.6px;color:#333"></div>
<div class="a" style="left:145.5px;top:508.1px;width:6.5px;height:8.7px;background:#f2f2f2;border:1px solid #c4c4c4;border-radius:1px"></div>
<div class="a" style="left:1px;top:517.8px;width:151px;height:10.7px;background:#fff;border-bottom:1px solid #dadada"></div>
<div class="a" style="left:73px;top:517.8px;width:1px;height:10.7px;background:#cfcfcf"></div>
<div class="a" style="left:145px;top:517.8px;width:1px;height:10.7px;background:#dadada"></div>
<div class="a" style="left:6px;top:518.3px;color:#333"><span class="c">运行控制</span></div>
<div class="a" style="left:75px;top:518.3px;color:#333"></div>
<div class="a" style="left:145.5px;top:518.8px;width:6.5px;height:8.7px;background:#f2f2f2;border:1px solid #c4c4c4;border-radius:1px"></div>
<div class="a" style="left:74px;top:165px;width:71px;height:10.6px;border:1px solid #555"></div>
<div class="a" style="left:146px;top:178px;width:6px;height:10px;background:#e8e8e8;border:1px solid #ccc"></div>
<div class="a" style="left:152px;top:154px;width:11px;height:375px;background:#ececec"></div>
<div class="a" style="left:153px;top:164px;width:8px;height:218px;background:#cdcdcd"></div>
<svg class="ic" style="left:154px;top:157px" width="8" height="5"><path d="M1,4 L4,1 L7,4" fill="none" stroke="#666" stroke-width="1"/></svg>
<svg class="ic" style="left:154px;top:521px" width="8" height="5"><path d="M1,1 L4,4 L7,1" fill="none" stroke="#666" stroke-width="1"/></svg>
<div class="a" style="left:0px;top:529px;width:163px;height:14px;background:#f0f0f0"></div>
<div class="a" style="left:2px;top:531px;color:#1a66cc;text-decoration:underline"><span class="c">属性帮助</span></div>
<div class="a" style="left:121px;top:531px;width:39px;height:11px;background:#dcdcdc;border:1px solid #d0d0d0"></div>
<div class="a" style="left:134px;top:532px;color:#aaa"><span class="c">应用</span></div>
<div class="a" style="left:161px;top:90px;width:4px;height:453px;background:#f6f6f6"></div>
<div class="a" style="left:164.5px;top:90px;width:1px;height:443px;background:#888"></div>
<div class="a" style="left:165px;top:90px;width:646px;height:443px;overflow:hidden"><svg width="646" height="443" viewBox="165 90 646 443" style="display:block">
<defs>
<filter id="nz" x="0" y="0" width="100%" height="100%">
<feTurbulence type="fractalNoise" baseFrequency="1.8" numOctaves="1" seed="3" result="t"/>
<feColorMatrix type="matrix" values="0 0 0 0 0.25  0 0 0 0 0.25  0 0 0 0 0.235  0 0 0 2.6 -1.5" result="s"/>
<feComposite in="s" in2="SourceGraphic" operator="in" result="m"/>
<feMerge><feMergeNode in="SourceGraphic"/><feMergeNode in="m"/></feMerge>
</filter>
</defs>
<rect x="165" y="90" width="646" height="443" fill="#fff"/>
<polygon points="165,90 811,90 811,141 656,157.5 656,245 462,195 403,197 165,215" fill="#515151"/>
<polygon points="165,135 461,118.5 560,127 250,154 165,147" fill="#5d5d5d"/>
<polygon points="462,118 540,110 729,116 494,178 462,190" fill="#5a5a5a"/>
<polygon points="567,90 811,90 811,100 648,104" fill="#0a8a10"/>
<polygon points="567,90 690,90 648,104" fill="#077a0c"/>
<g stroke="#111" stroke-width="0.6"><line x1="690" y1="90" x2="648" y2="104"/><line x1="754" y1="90" x2="754" y2="101"/></g>
<polygon points="540,110 811,99.5 811,108 540,117" fill="#2c2c2c"/>
<polygon points="546,112.5 811,102.5 811,105.5 546,115.5" fill="#a9a592"/>
<g stroke="#222" stroke-width="1"><line x1="562" y1="111.9" x2="562" y2="114.9"/><line x1="586" y1="111.0" x2="586" y2="114.0"/><line x1="610" y1="110.1" x2="610" y2="113.1"/><line x1="634" y1="109.2" x2="634" y2="112.2"/><line x1="658" y1="108.3" x2="658" y2="111.3"/><line x1="682" y1="107.4" x2="682" y2="110.4"/><line x1="706" y1="106.5" x2="706" y2="109.5"/><line x1="730" y1="105.6" x2="730" y2="108.6"/><line x1="754" y1="104.7" x2="754" y2="107.7"/><line x1="778" y1="103.8" x2="778" y2="106.8"/><line x1="802" y1="102.8" x2="802" y2="105.8"/></g>
<polygon points="494,178 729,116 811,108 811,141 656,158 656,245 462,190" fill="#077c0e"/>
<g stroke="#111" stroke-width="0.6"><line x1="729" y1="116" x2="662" y2="156.8"/><line x1="729" y1="116" x2="670" y2="156.0"/><line x1="729" y1="116" x2="678" y2="155.1"/><line x1="729" y1="116" x2="686" y2="154.3"/><line x1="729" y1="116" x2="697" y2="153.1"/><line x1="729" y1="116" x2="707" y2="152.1"/><line x1="729" y1="116" x2="716" y2="151.1"/><line x1="729" y1="116" x2="724" y2="150.2"/><line x1="729" y1="116" x2="732" y2="149.4"/><line x1="729" y1="116" x2="740" y2="148.6"/><line x1="729" y1="116" x2="748" y2="147.7"/><line x1="729" y1="116" x2="759" y2="146.5"/><line x1="729" y1="116" x2="769" y2="145.5"/><line x1="729" y1="116" x2="779" y2="144.4"/><line x1="729" y1="116" x2="791" y2="143.1"/><line x1="729" y1="116" x2="811" y2="121"/><line x1="729" y1="116" x2="811" y2="131"/><line x1="729" y1="116" x2="811" y2="138"/></g>
<g stroke="#2a2a2a" stroke-width="0.6" fill="none"><line x1="462" y1="165" x2="729" y2="116"/><line x1="470" y1="150" x2="729" y2="116"/><line x1="490" y1="138" x2="729" y2="116"/><line x1="462" y1="178" x2="729" y2="116"/><line x1="540" y1="125" x2="729" y2="116"/></g>
<g stroke="#111" stroke-width="0.7" fill="none"><line x1="494" y1="178" x2="729" y2="116"/><line x1="480" y1="178" x2="656" y2="155.5"/><line x1="480" y1="180.5" x2="656" y2="158"/></g>
<polygon points="165,147 245,156 386,151 419,166 380,180 340,187 165,196" fill="#0a8c12"/>
<polygon points="165,147 245,156 230,193 165,196" fill="#076a0b"/>
<polygon points="165,170 230,193 165,196" fill="#0a9412"/>
<polygon points="340,153 386,151 419,166 380,180 350,186" fill="#10b820"/>
<polygon points="300,154 340,153 350,186 310,190" fill="#0c9c16"/>
<g stroke="#111" stroke-width="0.7" fill="none"><polyline points="165,147 245,156 386,151 419,166"/><line x1="165" y1="170" x2="230" y2="193"/><line x1="245" y1="156" x2="230" y2="193"/><line x1="269" y1="156" x2="276" y2="191"/><line x1="300" y1="154" x2="310" y2="190"/><line x1="340" y1="153" x2="350" y2="186"/><line x1="386" y1="151" x2="359" y2="184"/></g>
<path d="M165,196 L340,187 Q395,183 420,168 Q445,145 460,118 L484,118 Q470,150 451,164 Q430,182 400,190 L340,201 L165,212Z" fill="#595959"/>
<g stroke="#222" stroke-width="1.1" fill="none"><path d="M165,196.5 L340,187.5 Q395,183 420,168.3 Q445,145 460,118"/><path d="M165,204 L340,195 Q400,192 423,181 Q455,160 482,125"/><path d="M165,212 L340,201 Q410,195 423,187.7 L462,179"/></g>
<g stroke="#bfb3a0" stroke-width="1" fill="none" stroke-dasharray="4 1.5"><path d="M165,210 L340,199.5 Q405,194 423,186"/></g>
<g stroke="#1a1a1a" stroke-width="1" fill="none" stroke-dasharray="3 2"><path d="M165,199 L340,190"/></g>
<path d="M412,174.7 Q440,155 455.4,133.8" stroke="#d8ccc4" stroke-width="1.5" fill="none"/>
<polyline points="478,172 512,135" stroke="#d8ccc4" stroke-width="1.5" fill="none"/>
<g stroke="#262626" stroke-width="0.7" fill="none"><line x1="308" y1="91" x2="461" y2="118.5"/><line x1="461" y1="118.5" x2="560" y2="97"/><line x1="465" y1="90" x2="461" y2="118.5"/><line x1="166" y1="135" x2="461" y2="118.5"/><line x1="250" y1="154" x2="560" y2="127"/><line x1="461" y1="118.5" x2="600" y2="150"/><line x1="560" y1="97" x2="811" y2="90"/></g>
<line x1="166" y1="139" x2="457" y2="134" stroke="#1e1e1e" stroke-width="1" stroke-dasharray="3 2"/>
<polygon points="165,212 340,201 418,190 403,197 462,195 566,233 446,302 325,267.5 308,267.5 189,314 165,314" fill="#0a8c12"/>
<polygon points="286,207 190,312 250,289" fill="#0a8010"/>
<polygon points="286,207 165,254 165,294" fill="#0b9414"/>
<g stroke="#111" stroke-width="0.7"><line x1="286" y1="207" x2="165" y2="254.8"/><line x1="286" y1="207" x2="165" y2="294"/><line x1="286" y1="207" x2="191.7" y2="313"/><line x1="286" y1="207" x2="250" y2="289"/><line x1="286" y1="207" x2="306" y2="266"/><line x1="286" y1="207" x2="337.7" y2="260"/></g>
<polygon points="403,197 424,188.5 453,199.5 420,216 400,215" fill="#646464"/>
<path d="M165,313 L189,314 L308,267.5 L325,267.5 L446,302 L566,233 L765,292.5 Q700,330 590,350 L444.5,387 L354,404 L165,350Z" fill="#05690a"/>
<polygon points="165,350 354,404 350.7,407.5 165,403" fill="#0a8a12"/>
<g stroke="#1d1d1d" stroke-width="0.6"><line x1="165" y1="362" x2="300" y2="396"/><line x1="165" y1="374" x2="280" y2="398"/></g>
<polygon points="165,387 322,402 165,402" fill="#d3cbb6"/>
<line x1="191.7" y1="313.5" x2="309" y2="267.5" stroke="#1a1a1a" stroke-width="2.6"/>
<line x1="191.7" y1="313.5" x2="309" y2="267.5" stroke="#6a6a6a" stroke-width="0.8"/>
<line x1="202" y1="316" x2="432" y2="384.5" stroke="#1a1a1a" stroke-width="2.6"/>
<line x1="202" y1="316" x2="432" y2="384.5" stroke="#6a6a6a" stroke-width="0.8"/>
<line x1="165" y1="350" x2="354" y2="402" stroke="#1a1a1a" stroke-width="2.6"/>
<line x1="165" y1="350" x2="354" y2="402" stroke="#6a6a6a" stroke-width="0.8"/>
<line x1="311" y1="268" x2="590" y2="350" stroke="#1a1a1a" stroke-width="2.6"/>
<line x1="311" y1="268" x2="590" y2="350" stroke="#6a6a6a" stroke-width="0.8"/>
<polygon points="453.6,199.4 566,233 446,302 326,267.5" fill="#5571ad"/>
<polygon points="408,229.2 527.5,254.8 447,302.4 364,274.3 364,265.8 412.8,252.4" fill="#4a64a3"/>
<polygon points="342,268.2 408,231.6 412.8,252.4" fill="#6682bc"/>
<polygon points="348,268.2 364,265.8 364,274.3" fill="#a9bde5"/>
<g stroke="#3f5a98" stroke-width="0.7"><line x1="389" y1="258" x2="389" y2="281"/><line x1="439" y1="252" x2="439" y2="297"/><line x1="464" y1="252" x2="464" y2="290"/><line x1="487.5" y1="252" x2="487.5" y2="276"/><line x1="364.5" y1="265" x2="364.5" y2="275"/></g>
<polygon points="453.6,199.4 566,233 446,302 326,267.5" fill="none" stroke="#3d5cb0" stroke-width="1.3"/>
<circle cx="477" cy="224" r="2" fill="#e8f0ff"/><line x1="477" y1="224" x2="450" y2="250" stroke="#6a7aa0" stroke-width="0.5"/>
<line x1="569" y1="235.5" x2="281" y2="385" stroke="#30302d" stroke-width="6" filter="url(#nz)"/>
<g stroke="#484848" stroke-width="1.3"><line x1="373" y1="410" x2="373" y2="443"/><line x1="380" y1="409" x2="380" y2="449"/><line x1="387" y1="408" x2="387" y2="450"/><line x1="394" y1="406" x2="394" y2="456"/><line x1="401" y1="404" x2="401" y2="458"/><line x1="408" y1="402" x2="408" y2="463"/><line x1="415" y1="400" x2="415" y2="465"/><line x1="422" y1="398" x2="422" y2="472"/><line x1="429" y1="396" x2="429" y2="473"/><line x1="437" y1="394" x2="437" y2="531"/><line x1="443" y1="413" x2="443" y2="484"/><line x1="450" y1="415" x2="450" y2="486"/><line x1="458" y1="417" x2="458" y2="489"/><line x1="465" y1="419" x2="465" y2="497"/><line x1="472" y1="421" x2="472" y2="514"/><line x1="493" y1="440" x2="493" y2="531"/><line x1="500" y1="440" x2="500" y2="531"/><line x1="507" y1="440" x2="507" y2="531"/><line x1="514" y1="440" x2="514" y2="531"/><line x1="521.5" y1="440" x2="521.5" y2="531"/><line x1="529" y1="440" x2="529" y2="531"/><line x1="543" y1="460" x2="543" y2="531"/><line x1="550" y1="460" x2="550" y2="531"/><line x1="557" y1="460" x2="557" y2="531"/><line x1="568" y1="505" x2="568" y2="533"/><line x1="575" y1="505" x2="575" y2="533"/><line x1="582" y1="505" x2="582" y2="533"/><line x1="590" y1="505" x2="590" y2="533"/><line x1="597" y1="505" x2="597" y2="533"/><line x1="604" y1="505" x2="604" y2="533"/><line x1="611" y1="505" x2="611" y2="533"/><line x1="619" y1="505" x2="619" y2="533"/><line x1="626" y1="505" x2="626" y2="533"/><line x1="633" y1="505" x2="633" y2="533"/><line x1="646" y1="510" x2="646" y2="533"/><line x1="653" y1="510" x2="653" y2="533"/><line x1="660" y1="510" x2="660" y2="533"/><line x1="667" y1="510" x2="667" y2="533"/><line x1="674" y1="510" x2="674" y2="533"/><line x1="681" y1="510" x2="681" y2="533"/><line x1="688" y1="510" x2="688" y2="533"/><line x1="695" y1="510" x2="695" y2="533"/><line x1="702" y1="510" x2="702" y2="533"/><line x1="709" y1="510" x2="709" y2="533"/><line x1="718" y1="506" x2="718" y2="533"/><line x1="725" y1="506" x2="725" y2="533"/><line x1="732" y1="506" x2="732" y2="533"/><line x1="739" y1="506" x2="739" y2="533"/><line x1="746" y1="506" x2="746" y2="533"/><line x1="753" y1="506" x2="753" y2="533"/><line x1="760" y1="506" x2="760" y2="533"/><line x1="767" y1="506" x2="767" y2="533"/></g>
<g stroke="#60d060" stroke-width="0.8" fill="none"><polyline points="165,449 422,447"/><polyline points="375,405 487,438"/></g>
<path d="M439,388 L590,351 Q700,331 765,293 L811,293 L811,533 L773,533 L713,508.4 L712,533 L640.5,512.3 L638,533 L562.5,508.4 L561,470 L537,459 L487,441 L487,425 L439,413Z" fill="#2d2e2a" filter="url(#nz)"/>
<g stroke="#0e0e0e" stroke-width="1.1"><line x1="464" y1="384.1" x2="464" y2="531"/><line x1="489" y1="377.9" x2="489" y2="531"/><line x1="513.8" y1="371.7" x2="513.8" y2="531"/><line x1="538.5" y1="365.5" x2="538.5" y2="531"/><line x1="563.3" y1="359.3" x2="563.3" y2="531"/><line x1="586" y1="353.6" x2="586" y2="531"/><line x1="612" y1="346.6" x2="612" y2="531"/><line x1="637.5" y1="339.2" x2="637.5" y2="531"/><line x1="650" y1="335.6" x2="650" y2="531"/><line x1="662" y1="332.1" x2="662" y2="531"/><line x1="687" y1="324.9" x2="687" y2="531"/><line x1="711.8" y1="323.5" x2="711.8" y2="531"/><line x1="736.5" y1="323.5" x2="736.5" y2="531"/><line x1="748" y1="323.5" x2="748" y2="531"/><line x1="761" y1="323.5" x2="761" y2="531"/><line x1="786" y1="323.5" x2="786" y2="531"/></g>
<path d="M165,402 L350.7,407 L444.5,387 L590,351 Q700,331 765,293" stroke="#666" stroke-width="5" fill="none" transform="translate(0,2.5)"/>
<path d="M165,402 L350.7,407 L444.5,387 L590,351 Q700,331 765,293" stroke="#1a1a1a" stroke-width="1" fill="none"/>
<polygon points="708.5,320.6 721,313.6 766.6,293.4 775,296 739,319 739,329.4" fill="#505050"/>
<polygon points="739,319 773.6,296 811,291.6 811,321.5 739,329.4" fill="#8e8e8e"/>
<polyline points="739,324 760,307 811,302" stroke="#666" stroke-width="0.6" fill="none"/>
<polygon points="462,169 800,268.7 800,276 462,178" fill="#2c2c2c"/>
<polygon points="462,178 800,276 800,283 462,188" fill="#3a3a36" filter="url(#nz)"/>
<line x1="462" y1="188" x2="800" y2="283" stroke="#0a8a10" stroke-width="0.8"/>
<polygon points="462,188.5 800,283.5 811,283 811,291.6 773.6,296 755,289 600,241.7 462,200" fill="#5a5a5a"/>
<polyline points="424,188.5 462,200 600,241.7 755,289 773,296" stroke="#222" stroke-width="1" fill="none"/>
<polyline points="770,295 811,290" stroke="#b0a890" stroke-width="1.5" fill="none"/>
<g stroke="#2e2e2e" stroke-width="1.7" fill="none"><path d="M472,204 V127 Q472,120 483,116"/><path d="M500,213 V137 Q500,130 511,126"/><path d="M528,221 V145 Q528,138 539,134"/><path d="M557,230 V153 Q557,146 568,142"/><path d="M585,238 V160.5 Q585,153.5 596,149.5"/><path d="M614,247 V169 Q614,162 625,158"/><path d="M641,255 V178 Q641,171 652,167"/><path d="M670,264 V187 Q670,180 681,176"/><path d="M698,273 V196 Q698,189 709,185"/><path d="M727,282 V206 Q727,199 738,195"/><path d="M755,289 V215 Q755,208 766,204"/></g>
<g stroke="#9a9a9a" stroke-width="0.6" fill="none"><path d="M472,204 V127 Q472,120 483,116"/><path d="M500,213 V137 Q500,130 511,126"/><path d="M528,221 V145 Q528,138 539,134"/><path d="M557,230 V153 Q557,146 568,142"/><path d="M585,238 V160.5 Q585,153.5 596,149.5"/><path d="M614,247 V169 Q614,162 625,158"/><path d="M641,255 V178 Q641,171 652,167"/><path d="M670,264 V187 Q670,180 681,176"/><path d="M698,273 V196 Q698,189 709,185"/><path d="M727,282 V206 Q727,199 738,195"/><path d="M755,289 V215 Q755,208 766,204"/></g>
<g fill="#3a64b0"><circle cx="483" cy="116" r="1.3"/><circle cx="511" cy="126" r="1.3"/><circle cx="539" cy="134" r="1.3"/><circle cx="568" cy="142" r="1.3"/><circle cx="596" cy="149.5" r="1.3"/><circle cx="625" cy="158" r="1.3"/><circle cx="652" cy="167" r="1.3"/><circle cx="681" cy="176" r="1.3"/><circle cx="709" cy="185" r="1.3"/><circle cx="738" cy="195" r="1.3"/><circle cx="766" cy="204" r="1.3"/></g>
<g fill="#999"><rect x="470.2" y="202" width="3.6" height="3"/><rect x="498.2" y="211" width="3.6" height="3"/><rect x="526.2" y="219" width="3.6" height="3"/><rect x="555.2" y="228" width="3.6" height="3"/><rect x="583.2" y="236" width="3.6" height="3"/><rect x="612.2" y="245" width="3.6" height="3"/><rect x="639.2" y="253" width="3.6" height="3"/><rect x="668.2" y="262" width="3.6" height="3"/><rect x="696.2" y="271" width="3.6" height="3"/><rect x="725.2" y="280" width="3.6" height="3"/><rect x="753.2" y="287" width="3.6" height="3"/></g>
<ellipse cx="761.5" cy="170.6" rx="37.5" ry="9" fill="none" stroke="#e2e2e2" stroke-width="2.2"/>
<ellipse cx="763" cy="168" rx="18" ry="4" fill="#eeeeee"/>
<polygon points="747,145 753,139.5 781,139.5 779.6,146.6 751,146.6" fill="#d8e6d8" opacity="0.75"/>
<polygon points="747,145 751,146.6 751,170.3 747.5,167" fill="#dedede"/>
<polygon points="751,146.6 779.6,146.6 779.6,170.3 751,170.3" fill="#e6e6e6" stroke="#d4d4d4" stroke-width="0.6"/>
<g stroke="#a0a0a0" stroke-width="0.9" fill="none"><path d="M758,153 H773"/><path d="M765.5,149.5 Q764,157 757,162"/><rect x="762.5" y="155.5" width="8" height="6"/></g><path d="M749,151 v8" stroke="#aaa" stroke-width="0.7"/>
<g fill="#bbb" font-size="3" font-family="Liberation Sans"><text x="726" y="172">--</text><text x="789" y="166">--</text><text x="766" y="179">--</text></g>
<rect x="792.5" y="197.5" width="18" height="62" rx="3" fill="#f6f6f6" stroke="#c4c4c4" stroke-width="0.8"/>
<circle cx="801.5" cy="213" r="4.5" fill="none" stroke="#a8a8a8" stroke-width="1.3"/><circle cx="801.5" cy="213" r="2.4" fill="none" stroke="#a8a8a8" stroke-width="0.9"/><path d="M800,221 h3 l-1.5,1.5z" fill="#888"/>
<line x1="795" y1="226" x2="808" y2="226" stroke="#ddd"/><rect x="797" y="231" width="6" height="6" fill="none" stroke="#a0a0a0" stroke-width="0.9"/><circle cx="803.5" cy="237" r="1.5" fill="none" stroke="#888" stroke-width="0.7"/><path d="M800,244 h3 l-1.5,1.5z" fill="#888"/>
<circle cx="806" cy="200.5" r="1.4" fill="none" stroke="#aaa" stroke-width="0.7"/><circle cx="806" cy="256" r="1.4" fill="none" stroke="#aaa" stroke-width="0.7"/>
<g stroke="#fff" stroke-width="1.3" fill="none"><line x1="786" y1="99" x2="791" y2="99"/><rect x="795" y="94.5" width="5" height="5"/><line x1="803" y1="94" x2="809" y2="100"/><line x1="809" y1="94" x2="803" y2="100"/></g>
</svg></div>
<div class="a" style="left:811px;top:90px;width:12px;height:443px;background:#f0f0f0;border-left:1px solid #ddd"></div>
<svg class="ic" style="left:813px;top:93px" width="8" height="5"><path d="M1,4 L4,1 L7,4" fill="none" stroke="#666" stroke-width="1"/></svg>
<div class="a" style="left:813px;top:305px;width:8px;height:8px;background:#d6d6d6"></div>
<svg class="ic" style="left:813px;top:524px" width="8" height="5"><path d="M1,1 L4,4 L7,1" fill="none" stroke="#666" stroke-width="1"/></svg>
<div class="a" style="left:165px;top:533px;width:658px;height:10px;background:#f3f3f3;border-top:1px solid #ddd"></div>
<div class="a" style="left:165px;top:533px;width:255px;height:10px;background:#fbfbfb"></div>
<div class="a" style="left:176px;top:534px;color:#333">1 : 100</div>
<svg class="ic" style="left:207px;top:533px" width="210" height="10" viewBox="215 533 210 10">
<g stroke="#555" stroke-width="0.8" fill="none"><rect x="217" y="535" width="8" height="6"/><path d="M217,535 l4,3 l4,-3"/></g>
<rect x="230" y="535" width="8" height="6" fill="#7eb4ea" stroke="#2a6fb8" stroke-width="0.7"/>
<circle cx="245" cy="538" r="3" fill="#f3c040"/><path d="M247,538 l3,3 M250,538 l-3,3" stroke="#d33"/>
<circle cx="259" cy="537" r="2.5" fill="#7eb4ea"/><path d="M261,538 l3,3 M264,538 l-3,3" stroke="#d33"/>
<path d="M270,536 q4,-2 8,1 l-3,3z" fill="#cfe0f0" stroke="#556" stroke-width="0.6"/>
<path d="M283,540 l4,-4 l4,3" stroke="#2a6fb8" fill="none" stroke-width="1.5"/><path d="M287,537 l3,3 M290,537 l-3,3" stroke="#d33"/>
<path d="M296,540 l4,-4 l4,3" stroke="#2a6fb8" fill="none" stroke-width="1.5"/>
<rect x="310" y="535" width="7" height="6" fill="#fff" stroke="#555" stroke-width="0.7"/><circle cx="316" cy="540" r="1.5" fill="#3a3"/>
<path d="M324,539 q3,-4 7,0 q-3,3 -7,0" fill="none" stroke="#555" stroke-width="0.8"/>
<circle cx="338" cy="537" r="1.3" fill="#2a6fb8"/><path d="M338,538 v3" stroke="#2a6fb8"/>
<rect x="345" y="535" width="8" height="6" fill="none" stroke="#555" stroke-width="0.8"/>
<circle cx="362" cy="538" r="3.5" fill="#ddd" stroke="#666" stroke-width="0.7"/>
<rect x="370" y="535" width="8" height="6" fill="none" stroke="#555" stroke-width="0.8"/><rect x="376" y="534" width="3" height="3" fill="#555"/>
<path d="M389,535 l-3,3 l3,3" stroke="#444" fill="none"/>
</svg>
<div class="a" style="left:420px;top:534px;width:391px;height:8px;background:#f0f0f0"></div>
<div class="a" style="left:578px;top:534px;width:9px;height:8px;background:#d8d8d8"></div>
<svg class="ic" style="left:804px;top:535px" width="5" height="7"><path d="M1,1 L4,3.5 L1,6" fill="none" stroke="#555"/></svg>
<div class="a" style="left:823px;top:90px;width:201px;height:453px;background:#fff"></div>
<div class="a" style="left:823px;top:90px;width:201px;height:10px;background:#c5d4e3"></div>
<div class="a" style="left:825px;top:90.5px;color:#222;"><span class="c">项目浏览器</span> - LTTB_<span class="c">大坝及其护坡</span>.rvt</div>
<svg class="ic" style="left:1016px;top:92px" width="7" height="7"><path d="M1,1 L6,6 M6,1 L1,6" stroke="#222" stroke-width="1.4"/></svg>
<div class="a" style="left:823px;top:100px;width:201px;height:1.5px;background:#a0a0a0"></div>
<div class="a" style="left:1017px;top:101px;width:7px;height:439px;background:#f0f0f0"></div>
<div class="a" style="left:1017px;top:110px;width:7px;height:106px;background:#cdcdcd"></div>
<div class="a" style="left:1021px;top:437px;width:3px;height:30px;background:#555"></div>
<div class="a" style="left:823.5px;top:101px;width:1px;height:442px;background:#9a9a9a"></div>
<div class="a" style="left:839.0px;top:106.1px;width:1px;height:10.730000000000004px;background:#d6d6d6"></div>
<div class="a" style="left:849.5px;top:116.83px;width:1px;height:10.730000000000004px;background:#d6d6d6"></div>
<div class="a" style="left:849.5px;top:127.56px;width:1px;height:10.730000000000018px;background:#d6d6d6"></div>
<div class="a" style="left:849.5px;top:138.29000000000002px;width:1px;height:10.72999999999999px;background:#d6d6d6"></div>
<div class="a" style="left:839.0px;top:116.83px;width:1px;height:42.92px;background:#d6d6d6"></div>
<div class="a" style="left:839.0px;top:159.75px;width:1px;height:10.72999999999999px;background:#d6d6d6"></div>
<div class="a" style="left:849.5px;top:170.48px;width:1px;height:10.72999999999999px;background:#d6d6d6"></div>
<div class="a" style="left:849.5px;top:181.20999999999998px;width:1px;height:10.72999999999999px;background:#d6d6d6"></div>
<div class="a" style="left:849.5px;top:191.93999999999997px;width:1px;height:10.72999999999999px;background:#d6d6d6"></div>
<div class="a" style="left:849.5px;top:202.66999999999996px;width:1px;height:10.72999999999999px;background:#d6d6d6"></div>
<div class="a" style="left:849.5px;top:213.39999999999995px;width:1px;height:10.72999999999999px;background:#d6d6d6"></div>
<div class="a" style="left:849.5px;top:224.12999999999994px;width:1px;height:10.72999999999999px;background:#d6d6d6"></div>
<div class="a" style="left:839.0px;top:170.48px;width:1px;height:75.10999999999993px;background:#d6d6d6"></div>
<div class="a" style="left:849.5px;top:245.58999999999992px;width:1px;height:10.729999999999961px;background:#d6d6d6"></div>
<div class="a" style="left:849.5px;top:256.3199999999999px;width:1px;height:10.730000000000018px;background:#d6d6d6"></div>
<div class="a" style="left:849.5px;top:267.0499999999999px;width:1px;height:10.730000000000018px;background:#d6d6d6"></div>
<div class="a" style="left:849.5px;top:277.7799999999999px;width:1px;height:10.730000000000018px;background:#d6d6d6"></div>
<div class="a" style="left:839.0px;top:245.58999999999992px;width:1px;height:53.650000000000034px;background:#d6d6d6"></div>
<div class="a" style="left:849.5px;top:299.23999999999995px;width:1px;height:10.730000000000018px;background:#d6d6d6"></div>
<div class="a" style="left:849.5px;top:309.96999999999997px;width:1px;height:10.730000000000018px;background:#d6d6d6"></div>
<div class="a" style="left:839.0px;top:363.62000000000006px;width:1px;height:10.730000000000018px;background:#d6d6d6"></div>
<div class="a" style="left:849.5px;top:374.3500000000001px;width:1px;height:10.730000000000018px;background:#d6d6d6"></div>
<div class="a" style="left:860.0px;top:385.0800000000001px;width:1px;height:10.730000000000018px;background:#d6d6d6"></div>
<div class="a" style="left:849.5px;top:385.0800000000001px;width:1px;height:21.460000000000036px;background:#d6d6d6"></div>
<div class="a" style="left:860.0px;top:406.54000000000013px;width:1px;height:10.730000000000018px;background:#d6d6d6"></div>
<div class="a" style="left:839.0px;top:374.3500000000001px;width:1px;height:53.65000000000009px;background:#d6d6d6"></div>
<div class="a" style="left:839.0px;top:428.00000000000017px;width:1px;height:10.730000000000018px;background:#d6d6d6"></div>
<div class="a" style="left:839.0px;top:438.7300000000002px;width:1px;height:10.730000000000018px;background:#d6d6d6"></div>
<div class="a" style="left:839.0px;top:449.4600000000002px;width:1px;height:10.730000000000018px;background:#d6d6d6"></div>
<div class="a" style="left:839.0px;top:460.1900000000002px;width:1px;height:10.730000000000018px;background:#d6d6d6"></div>
<div class="a" style="left:849.5px;top:470.92000000000024px;width:1px;height:10.730000000000018px;background:#d6d6d6"></div>
<div class="a" style="left:849.5px;top:481.65000000000026px;width:1px;height:10.730000000000018px;background:#d6d6d6"></div>
<div class="a" style="left:849.5px;top:492.3800000000003px;width:1px;height:10.730000000000018px;background:#d6d6d6"></div>
<div class="a" style="left:849.5px;top:503.1100000000003px;width:1px;height:10.729999999999961px;background:#d6d6d6"></div>
<div class="a" style="left:849.5px;top:513.8400000000003px;width:1px;height:10.730000000000018px;background:#d6d6d6"></div>
<div class="a" style="left:839.0px;top:470.92000000000024px;width:1px;height:64.38000000000005px;background:#d6d6d6"></div>
<div class="a" style="left:826.5px;top:103.6px;width:6px;height:6px;background:#fff;border:1px solid #c6c6c6"></div>
<div class="a" style="left:828.0px;top:106.1px;width:3px;height:1px;background:#777"></div>
<div class="a" style="left:832.5px;top:106.1px;width:5px;height:1px;background:#d6d6d6"></div>
<svg class="ic" style="left:835px;top:102.1px" width="9" height="9"><path d="M0.5,2.5 v-2 h2 M6.5,0.5 h2 v2 M8.5,6.5 v2 h-2 M2.5,8.5 h-2 v-2" fill="none" stroke="#555" stroke-width="0.8"/><circle cx="4.5" cy="4.5" r="2" fill="none" stroke="#555" stroke-width="0.8"/></svg>
<div class="a" style="left:845.5px;top:101.1px;width:36px;height:10px;background:#e8e8e8"></div>
<div class="a" style="left:846.5px;top:101.1px;color:#333"><span class="c">视图</span> (<span class="c">全部</span>)</div>
<div class="a" style="left:837.0px;top:114.33px;width:6px;height:6px;background:#fff;border:1px solid #c6c6c6"></div>
<div class="a" style="left:838.5px;top:116.83px;width:3px;height:1px;background:#777"></div>
<div class="a" style="left:843.0px;top:116.83px;width:5px;height:1px;background:#d6d6d6"></div>
<div class="a" style="left:850.0px;top:111.83px;color:#333"><span class="c">楼层平面</span></div>
<div class="a" style="left:849.5px;top:127.56px;width:8.5px;height:1px;background:#d6d6d6"></div>
<div class="a" style="left:860.5px;top:122.56px;color:#333"><span class="c">场地</span></div>
<div class="a" style="left:849.5px;top:138.29000000000002px;width:8.5px;height:1px;background:#d6d6d6"></div>
<div class="a" style="left:860.5px;top:133.29000000000002px;color:#333"><span class="c">标高</span> 1</div>
<div class="a" style="left:849.5px;top:149.02px;width:8.5px;height:1px;background:#d6d6d6"></div>
<div class="a" style="left:860.5px;top:144.02px;color:#333"><span class="c">标高</span> 1 <span class="c">大坝平面</span></div>
<div class="a" style="left:837.0px;top:157.25px;width:6px;height:6px;background:#fff;border:1px solid #c6c6c6"></div>
<div class="a" style="left:838.5px;top:159.75px;width:3px;height:1px;background:#777"></div>
<div class="a" style="left:839.5px;top:158.75px;width:1px;height:3px;background:#777"></div>
<div class="a" style="left:843.0px;top:159.75px;width:5px;height:1px;background:#d6d6d6"></div>
<div class="a" style="left:850.0px;top:154.75px;color:#333"><span class="c">天花板平面</span></div>
<div class="a" style="left:837.0px;top:167.98px;width:6px;height:6px;background:#fff;border:1px solid #c6c6c6"></div>
<div class="a" style="left:838.5px;top:170.48px;width:3px;height:1px;background:#777"></div>
<div class="a" style="left:843.0px;top:170.48px;width:5px;height:1px;background:#d6d6d6"></div>
<div class="a" style="left:850.0px;top:165.48px;color:#333"><span class="c">三维视图</span></div>
<div class="a" style="left:849.5px;top:181.20999999999998px;width:8.5px;height:1px;background:#d6d6d6"></div>
<div class="a" style="left:860.5px;top:176.20999999999998px;color:#333">{<span class="c">三维</span>}</div>
<div class="a" style="left:849.5px;top:191.93999999999997px;width:8.5px;height:1px;background:#d6d6d6"></div>
<div class="a" style="left:860.5px;top:186.93999999999997px;color:#333">{<span class="c">三维</span>} <span class="c">副本</span> 1</div>
<div class="a" style="left:849.5px;top:202.66999999999996px;width:8.5px;height:1px;background:#d6d6d6"></div>
<div class="a" style="left:860.5px;top:197.66999999999996px;color:#333">{<span class="c">三维</span>} <span class="c">副本</span> 2</div>
<div class="a" style="left:849.5px;top:213.39999999999995px;width:8.5px;height:1px;background:#d6d6d6"></div>
<div class="a" style="left:860.5px;top:208.39999999999995px;color:#333"><span class="c">挡墙</span></div>
<div class="a" style="left:849.5px;top:224.12999999999994px;width:8.5px;height:1px;background:#d6d6d6"></div>
<div class="a" style="left:860.5px;top:219.12999999999994px;color:#333"><span class="c">叠水墙</span></div>
<div class="a" style="left:849.5px;top:234.85999999999993px;width:8.5px;height:1px;background:#d6d6d6"></div>
<div class="a" style="left:860.5px;top:229.85999999999993px;color:#333"><span class="c">防渗墙</span></div>
<div class="a" style="left:837.0px;top:243.08999999999992px;width:6px;height:6px;background:#fff;border:1px solid #c6c6c6"></div>
<div class="a" style="left:838.5px;top:245.58999999999992px;width:3px;height:1px;background:#777"></div>
<div class="a" style="left:843.0px;top:245.58999999999992px;width:5px;height:1px;background:#d6d6d6"></div>
<div class="a" style="left:850.0px;top:240.58999999999992px;color:#333"><span class="c">立面</span> (<span class="c">建筑立面</span>)</div>
<div class="a" style="left:849.5px;top:256.3199999999999px;width:8.5px;height:1px;background:#d6d6d6"></div>
<div class="a" style="left:860.5px;top:251.31999999999988px;color:#333"><span class="c">东</span></div>
<div class="a" style="left:849.5px;top:267.0499999999999px;width:8.5px;height:1px;background:#d6d6d6"></div>
<div class="a" style="left:860.5px;top:262.0499999999999px;color:#333"><span class="c">北</span></div>
<div class="a" style="left:849.5px;top:277.7799999999999px;width:8.5px;height:1px;background:#d6d6d6"></div>
<div class="a" style="left:860.5px;top:272.7799999999999px;color:#333"><span class="c">南</span></div>
<div class="a" style="left:849.5px;top:288.50999999999993px;width:8.5px;height:1px;background:#d6d6d6"></div>
<div class="a" style="left:860.5px;top:283.50999999999993px;color:#333"><span class="c">西</span></div>
<div class="a" style="left:837.0px;top:296.73999999999995px;width:6px;height:6px;background:#fff;border:1px solid #c6c6c6"></div>
<div class="a" style="left:838.5px;top:299.23999999999995px;width:3px;height:1px;background:#777"></div>
<div class="a" style="left:843.0px;top:299.23999999999995px;width:5px;height:1px;background:#d6d6d6"></div>
<div class="a" style="left:850.0px;top:294.23999999999995px;color:#333"><span class="c">剖面</span> (<span class="c">建筑剖面</span>)</div>
<div class="a" style="left:849.5px;top:309.96999999999997px;width:8.5px;height:1px;background:#d6d6d6"></div>
<div class="a" style="left:860.5px;top:304.96999999999997px;color:#333"><span class="c">剖面</span> 1</div>
<div class="a" style="left:849.5px;top:320.7px;width:8.5px;height:1px;background:#d6d6d6"></div>
<div class="a" style="left:860.5px;top:315.7px;color:#333"><span class="c">防渗墙</span></div>
<div class="a" style="left:828.5px;top:331.43px;width:8.5px;height:1px;background:#d6d6d6"></div>
<svg class="ic" style="left:836px;top:327.43px" width="9" height="9"><rect x="0.5" y="0.5" width="8" height="8" fill="#f4f4f4" stroke="#666" stroke-width="0.8"/><path d="M2,3 h5 M2,5 h5 M2,7 h3" stroke="#888" stroke-width="0.7"/></svg>
<div class="a" style="left:846.5px;top:326.43px;color:#333"><span class="c">图例</span></div>
<div class="a" style="left:828.5px;top:342.16px;width:8.5px;height:1px;background:#d6d6d6"></div>
<svg class="ic" style="left:836px;top:338.16px" width="9" height="9"><rect x="0.5" y="0.5" width="8" height="8" fill="#f4f4f4" stroke="#666" stroke-width="0.8"/><path d="M2,3 h5 M2,5 h5 M2,7 h3" stroke="#888" stroke-width="0.7"/></svg>
<div class="a" style="left:846.5px;top:337.16px;color:#333"><span class="c">明细表</span>/<span class="c">数量</span> (<span class="c">全部</span>)</div>
<div class="a" style="left:828.5px;top:352.89000000000004px;width:8.5px;height:1px;background:#d6d6d6"></div>
<svg class="ic" style="left:836px;top:348.89000000000004px" width="9" height="9"><rect x="0.5" y="0.5" width="8" height="8" fill="#f4f4f4" stroke="#666" stroke-width="0.8"/><path d="M2,3 h5 M2,5 h5 M2,7 h3" stroke="#888" stroke-width="0.7"/></svg>
<div class="a" style="left:846.5px;top:347.89000000000004px;color:#333"><span class="c">图纸</span> (<span class="c">全部</span>)</div>
<div class="a" style="left:826.5px;top:361.12000000000006px;width:6px;height:6px;background:#fff;border:1px solid #c6c6c6"></div>
<div class="a" style="left:828.0px;top:363.62000000000006px;width:3px;height:1px;background:#777"></div>
<div class="a" style="left:832.5px;top:363.62000000000006px;width:5px;height:1px;background:#d6d6d6"></div>
<svg class="ic" style="left:836px;top:359.62000000000006px" width="9" height="9"><rect x="0.5" y="0.5" width="8" height="8" fill="#f4f4f4" stroke="#666" stroke-width="0.8"/><path d="M2,3 h5 M2,5 h5 M2,7 h3" stroke="#888" stroke-width="0.7"/></svg>
<div class="a" style="left:846.5px;top:358.62000000000006px;color:#333"><span class="c">族</span></div>
<div class="a" style="left:837.0px;top:371.8500000000001px;width:6px;height:6px;background:#fff;border:1px solid #c6c6c6"></div>
<div class="a" style="left:838.5px;top:374.3500000000001px;width:3px;height:1px;background:#777"></div>
<div class="a" style="left:843.0px;top:374.3500000000001px;width:5px;height:1px;background:#d6d6d6"></div>
<div class="a" style="left:850.0px;top:369.3500000000001px;color:#333"><span class="c">体量</span></div>
<div class="a" style="left:847.5px;top:382.5800000000001px;width:6px;height:6px;background:#fff;border:1px solid #c6c6c6"></div>
<div class="a" style="left:849.0px;top:385.0800000000001px;width:3px;height:1px;background:#777"></div>
<div class="a" style="left:853.5px;top:385.0800000000001px;width:5px;height:1px;background:#d6d6d6"></div>
<div class="a" style="left:860.5px;top:380.0800000000001px;color:#333"><span class="c">体量</span> 8</div>
<div class="a" style="left:860.0px;top:395.8100000000001px;width:8.5px;height:1px;background:#d6d6d6"></div>
<div class="a" style="left:871.0px;top:390.8100000000001px;color:#333"><span class="c">体量</span> 11</div>
<div class="a" style="left:847.5px;top:404.04000000000013px;width:6px;height:6px;background:#fff;border:1px solid #c6c6c6"></div>
<div class="a" style="left:849.0px;top:406.54000000000013px;width:3px;height:1px;background:#777"></div>
<div class="a" style="left:853.5px;top:406.54000000000013px;width:5px;height:1px;background:#d6d6d6"></div>
<div class="a" style="left:860.5px;top:401.54000000000013px;color:#333"><span class="c">体量</span> 9</div>
<div class="a" style="left:860.0px;top:417.27000000000015px;width:8.5px;height:1px;background:#d6d6d6"></div>
<div class="a" style="left:871.0px;top:412.27000000000015px;color:#333"><span class="c">体量</span> 4</div>
<div class="a" style="left:837.0px;top:425.50000000000017px;width:6px;height:6px;background:#fff;border:1px solid #c6c6c6"></div>
<div class="a" style="left:838.5px;top:428.00000000000017px;width:3px;height:1px;background:#777"></div>
<div class="a" style="left:839.5px;top:427.00000000000017px;width:1px;height:3px;background:#777"></div>
<div class="a" style="left:843.0px;top:428.00000000000017px;width:5px;height:1px;background:#d6d6d6"></div>
<div class="a" style="left:850.0px;top:423.00000000000017px;color:#333"><span class="c">坡道</span></div>
<div class="a" style="left:837.0px;top:436.2300000000002px;width:6px;height:6px;background:#fff;border:1px solid #c6c6c6"></div>
<div class="a" style="left:838.5px;top:438.7300000000002px;width:3px;height:1px;background:#777"></div>
<div class="a" style="left:839.5px;top:437.7300000000002px;width:1px;height:3px;background:#777"></div>
<div class="a" style="left:843.0px;top:438.7300000000002px;width:5px;height:1px;background:#d6d6d6"></div>
<div class="a" style="left:850.0px;top:433.7300000000002px;color:#333"><span class="c">填充图案</span></div>
<div class="a" style="left:837.0px;top:446.9600000000002px;width:6px;height:6px;background:#fff;border:1px solid #c6c6c6"></div>
<div class="a" style="left:838.5px;top:449.4600000000002px;width:3px;height:1px;background:#777"></div>
<div class="a" style="left:839.5px;top:448.4600000000002px;width:1px;height:3px;background:#777"></div>
<div class="a" style="left:843.0px;top:449.4600000000002px;width:5px;height:1px;background:#d6d6d6"></div>
<div class="a" style="left:850.0px;top:444.4600000000002px;color:#333"><span class="c">墙</span></div>
<div class="a" style="left:837.0px;top:457.6900000000002px;width:6px;height:6px;background:#fff;border:1px solid #c6c6c6"></div>
<div class="a" style="left:838.5px;top:460.1900000000002px;width:3px;height:1px;background:#777"></div>
<div class="a" style="left:839.5px;top:459.1900000000002px;width:1px;height:3px;background:#777"></div>
<div class="a" style="left:843.0px;top:460.1900000000002px;width:5px;height:1px;background:#d6d6d6"></div>
<div class="a" style="left:850.0px;top:455.1900000000002px;color:#333"><span class="c">天花板</span></div>
<div class="a" style="left:837.0px;top:468.42000000000024px;width:6px;height:6px;background:#fff;border:1px solid #c6c6c6"></div>
<div class="a" style="left:838.5px;top:470.92000000000024px;width:3px;height:1px;background:#777"></div>
<div class="a" style="left:843.0px;top:470.92000000000024px;width:5px;height:1px;background:#d6d6d6"></div>
<div class="a" style="left:850.0px;top:465.92000000000024px;color:#333"><span class="c">屋顶</span></div>
<div class="a" style="left:847.5px;top:479.15000000000026px;width:6px;height:6px;background:#fff;border:1px solid #c6c6c6"></div>
<div class="a" style="left:849.0px;top:481.65000000000026px;width:3px;height:1px;background:#777"></div>
<div class="a" style="left:850.0px;top:480.65000000000026px;width:1px;height:3px;background:#777"></div>
<div class="a" style="left:853.5px;top:481.65000000000026px;width:5px;height:1px;background:#d6d6d6"></div>
<div class="a" style="left:860.5px;top:476.65000000000026px;color:#333"><span class="c">基本屋顶</span></div>
<div class="a" style="left:847.5px;top:489.8800000000003px;width:6px;height:6px;background:#fff;border:1px solid #c6c6c6"></div>
<div class="a" style="left:849.0px;top:492.3800000000003px;width:3px;height:1px;background:#777"></div>
<div class="a" style="left:850.0px;top:491.3800000000003px;width:1px;height:3px;background:#777"></div>
<div class="a" style="left:853.5px;top:492.3800000000003px;width:5px;height:1px;background:#d6d6d6"></div>
<div class="a" style="left:860.5px;top:487.3800000000003px;color:#333"><span class="c">封檐板</span></div>
<div class="a" style="left:847.5px;top:500.6100000000003px;width:6px;height:6px;background:#fff;border:1px solid #c6c6c6"></div>
<div class="a" style="left:849.0px;top:503.1100000000003px;width:3px;height:1px;background:#777"></div>
<div class="a" style="left:850.0px;top:502.1100000000003px;width:1px;height:3px;background:#777"></div>
<div class="a" style="left:853.5px;top:503.1100000000003px;width:5px;height:1px;background:#d6d6d6"></div>
<div class="a" style="left:860.5px;top:498.1100000000003px;color:#333"><span class="c">屋檐底板</span></div>
<div class="a" style="left:847.5px;top:511.34000000000026px;width:6px;height:6px;background:#fff;border:1px solid #c6c6c6"></div>
<div class="a" style="left:849.0px;top:513.8400000000003px;width:3px;height:1px;background:#777"></div>
<div class="a" style="left:850.0px;top:512.8400000000003px;width:1px;height:3px;background:#777"></div>
<div class="a" style="left:853.5px;top:513.8400000000003px;width:5px;height:1px;background:#d6d6d6"></div>
<div class="a" style="left:860.5px;top:508.84000000000026px;color:#333"><span class="c">檐沟</span></div>
<div class="a" style="left:847.5px;top:522.0700000000003px;width:6px;height:6px;background:#fff;border:1px solid #c6c6c6"></div>
<div class="a" style="left:849.0px;top:524.5700000000003px;width:3px;height:1px;background:#777"></div>
<div class="a" style="left:850.0px;top:523.5700000000003px;width:1px;height:3px;background:#777"></div>
<div class="a" style="left:853.5px;top:524.5700000000003px;width:5px;height:1px;background:#d6d6d6"></div>
<div class="a" style="left:860.5px;top:519.5700000000003px;color:#333"><span class="c">玻璃斜窗</span></div>
<div class="a" style="left:837.0px;top:532.8000000000003px;width:6px;height:6px;background:#fff;border:1px solid #c6c6c6"></div>
<div class="a" style="left:838.5px;top:535.3000000000003px;width:3px;height:1px;background:#777"></div>
<div class="a" style="left:843.0px;top:535.3000000000003px;width:5px;height:1px;background:#d6d6d6"></div>
<div class="a" style="left:850.0px;top:530.3000000000003px;color:#333"><span class="c">常规模型</span></div>
<svg class="ic" style="left:1017px;top:104px" width="8" height="5"><path d="M1,4 L4,1 L7,4" fill="none" stroke="#666" stroke-width="1"/></svg>
<svg class="ic" style="left:1017px;top:533px" width="8" height="5"><path d="M1,1 L4,4 L7,1" fill="none" stroke="#666" stroke-width="1"/></svg>
<div class="a" style="left:0px;top:543px;width:1024px;height:13px;background:#e8e8e8;border-top:1px solid #d4d4d4"></div>
<div class="a" style="left:2px;top:544px;color:#333"><span class="c">单击可进行选择</span>; <span class="c">按</span> Tab <span class="c">键并单击可选择其他项目</span>; <span class="c">按</span> Ctrl <span class="c">键并单击可将新项目添加到选择集</span>; <span class="c">按</span> Shift <span class="c">键并单击可取消选择</span>。</div>
<svg class="ic" style="left:500px;top:543px" width="524" height="12" viewBox="500 543 524 12">
<path d="M508,553 v-5 q2,-3 4,0 v5 M512,548 q2,-3 4,0 v5" fill="none" stroke="#777"/>
<rect x="520" y="544.5" width="108" height="10" fill="#fff" stroke="#ccc"/><path d="M619,548 l2,2 l2,-2" stroke="#999" fill="none"/>
<path d="M634,553 l4,-6 l3,2z" fill="#ccc" stroke="#777" stroke-width="0.6"/><circle cx="648" cy="549" r="2" fill="none" stroke="#444"/>
<rect x="657" y="545" width="8" height="8" fill="#fff" stroke="#555"/><rect x="658" y="546" width="6" height="2" fill="#3c7bc4"/>
<rect x="671" y="545" width="8" height="8" fill="#ddd" stroke="#aaa"/>
<rect x="684" y="544.5" width="113" height="10" fill="#fff" stroke="#ccc"/><path d="M788,548 l2,2 l2,-2" stroke="#999" fill="none"/>
<g stroke="#555" stroke-width="0.9" fill="none">
<path d="M895,546 h8 l-3,4 v3 h-2 v-3z" fill="#f3c040"/>
<path d="M910,553 l3,-5 l5,2" stroke="#2a6fb8"/><path d="M915,546 l3,3 M918,546 l-3,3" stroke="#d33"/>
<rect x="924" y="546" width="7" height="6" fill="#f8d0a0"/><path d="M929,550 l3,3 M932,550 l-3,3" stroke="#d33"/>
<path d="M939,553 l2,-7 h5 v7z" fill="#cfe0f0" stroke="#2a6fb8"/>
<path d="M953,546 l3,3 l-3,3 M962,546 l-3,3" stroke="#333"/>
<circle cx="970" cy="549" r="3.5" stroke="#aaa"/>
<path d="M978,546 h8 l-3,4 v3 h-2 v-3z"/>
</g>
<text x="986" y="553" font-size="7" fill="#333" font-family="Liberation Sans">:1</text>
</svg>
<div class="a" style="left:688px;top:545px;color:#555"><span class="c">主模型</span></div>
<div class="a" style="left:0px;top:555.5px;width:1024px;height:1.5px;background:#1f1f1f"></div>
<div class="a" style="left:131px;top:555.5px;width:25px;height:1.5px;background:#d87a30"></div>
</body></html>
